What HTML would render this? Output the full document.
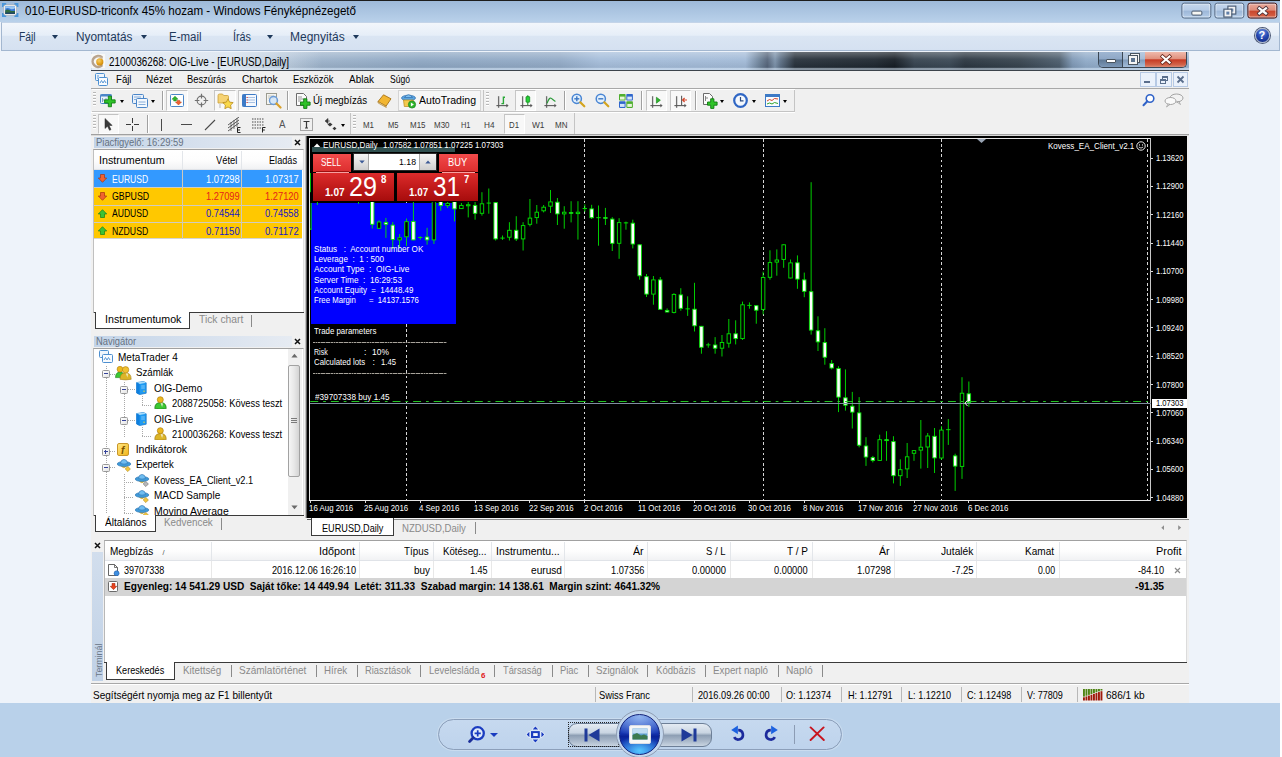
<!DOCTYPE html>
<html><head><meta charset="utf-8"><title>010-EURUSD-triconfx 45% hozam - Windows Fényképnézegető</title>
<style>
*{box-sizing:border-box;margin:0;padding:0}
html,body{width:1282px;height:757px;overflow:hidden;background:#eef3fa;font-family:"Liberation Sans",sans-serif;}
.a{position:absolute;display:block}
.t{position:absolute;white-space:pre;line-height:1}
#pvt{left:0;top:0;width:1280px;height:22px;background:linear-gradient(#9db9d9 0,#a9c3e0 40%,#b9d1ea 100%);border-top:1px solid #1c1c1c}
#pvm{left:1px;top:22px;width:1279px;height:29px;background:linear-gradient(#f2f6fb 0,#e6eef8 45%,#dae5f3 50%,#d5e1f1 100%);border:1px solid #a3b7d0;border-top:1px solid #c4d4e8}
#pvb{left:0;top:703px;width:1280px;height:54px;background:#b9d1ea}
#mtbg{left:91px;top:52px;width:1098px;height:651px;background:#f0f0f0}
.cb{top:0;width:30px;height:16px;border:1px solid #5c6f88;border-radius:3px;background:linear-gradient(#c6d7ec 0,#b5cbe6 48%,#9db7d8 52%,#b4cce8 100%);box-shadow:inset 0 0 0 1px rgba(255,255,255,.55)}
.cx{border-color:#4b1a1a;background:linear-gradient(#e9aa9c 0,#dc8a78 48%,#c8452c 52%,#d8664a 100%)}
.dn{top:35px;width:0;height:0;border-left:3.5px solid transparent;border-right:3.5px solid transparent;border-top:4px solid #1e395b}
#mtt{left:91px;top:52px;width:1098px;height:18px;background:linear-gradient(180deg,rgba(255,255,255,.30) 0,rgba(255,255,255,.06) 40%,rgba(0,0,0,.06) 85%,rgba(215,230,245,.55) 92%,rgba(215,230,245,.55) 100%),linear-gradient(90deg,#c8d6e6 0,#9db3cb 20.9%,#8fa8c4 30%,#93abc7 42.7%,#a6bedb 46.4%,#a3bbd8 59.6%,#6d8299 60.9%,#55647a 61.6%,#7d93ab 62.3%,#5d7086 62.8%,#27313b 64.1%,#1f2831 71.4%,#161d24 73.2%,#36434f 75%,#3a4855 78.2%,#2b3641 79.6%,#37444f 84.6%,#4c5d6d 88.2%,#7f99b6 89.4%,#90abc9 90.6%,#9db6d2 100%)}
#wst{left:1280px;top:0;width:2px;height:757px;background:#fff}
</style></head><body>
<div class="a" style="left:0;top:0;width:1282px;height:757px;overflow:hidden">
<div id="pvt" class="a"></div><div id="pvm" class="a"></div><div id="pvb" class="a"></div>
<svg class="a" style="left:2px;top:3px;" width="17" height="15" viewBox="0 0 17 15"><rect x="0" y="0" width="4.2" height="4" fill="#4a97dc"/><rect x="12.4" y="0" width="4" height="4" fill="#4a97dc"/><rect x="0" y="10" width="4.2" height="4" fill="#4a97dc"/><rect x="12.4" y="10" width="4" height="4" fill="#4a97dc"/>
<rect x="1.8" y="1.9" width="12.6" height="10.3" rx="1.6" fill="#fcfcfc" stroke="#a9a9ae" stroke-width="0.7"/><rect x="3.2" y="3.2" width="9.8" height="7.6" fill="#3a78d8"/><path d="M3.2 5.5 q3-1 5 0.3 t4.8 -0.5 V3.2 H3.2Z" fill="#9cc8f2"/><path d="M3.2 10.8 V7.6 q2-1.8 4.6-0.4 t5.2 0.6 V10.8Z" fill="#2f6a40"/><path d="M3.2 10.8 V9.6 h9.8 V10.8Z" fill="#1c3a6a"/></svg>
<div class="t" style="font-size:12px;color:#000;left:25.00px;top:5.00px;transform:scaleX(0.9675);transform-origin:0 0;">010-EURUSD-triconfx 45% hozam - Windows Fényképnézegető</div>
<div class="a" style="left:1181px;top:2px;width:100px;height:18px;transform:translate(0.35px,0.6px)"><div class="a cb" style="left:0px"><i class="a" style="left:9px;top:7px;width:11px;height:5px;background:#f6f6f2;border:1px solid #46566c;border-radius:1.5px"></i></div>
<div class="a cb" style="left:33px"><i class="a" style="left:13px;top:3px;width:7px;height:7px;border:2px solid #f2f2f2;outline:1px solid #46566c;background:#6f8db8"></i><i class="a" style="left:9px;top:6px;width:7px;height:7px;border:2px solid #f2f2f2;outline:1px solid #46566c;background:#5f7ea8"></i></div>
<div class="a cb cx" style="left:66px"><svg class="a" style="left:8px;top:2px" width="14" height="12" viewBox="0 0 14 12"><path d="M3 2.7 L9.6 7.9 M9.6 2.7 L3 7.9" stroke="#4a3038" stroke-width="4" stroke-linecap="square"/><path d="M3 2.7 L9.6 7.9 M9.6 2.7 L3 7.9" stroke="#fbfbfb" stroke-width="2.3" stroke-linecap="square"/></svg></div></div>
<div class="t" style="font-size:12px;color:#1e395b;left:18.70px;top:31.00px;transform:scaleX(0.8585);transform-origin:0 0;">Fájl</div>
<div class="t" style="font-size:12px;color:#1e395b;left:75.50px;top:31.00px;transform:scaleX(0.9852);transform-origin:0 0;">Nyomtatás</div>
<div class="t" style="font-size:12px;color:#1e395b;left:168.50px;top:31.00px;transform:scaleX(0.9558);transform-origin:0 0;">E-mail</div>
<div class="t" style="font-size:12px;color:#1e395b;left:233.00px;top:31.00px;transform:scaleX(0.8999);transform-origin:0 0;">Írás</div>
<div class="t" style="font-size:12px;color:#1e395b;left:290.00px;top:31.00px;">Megnyitás</div>
<i class="a dn" style="left:52px"></i>
<i class="a dn" style="left:141px"></i>
<i class="a dn" style="left:267px"></i>
<i class="a dn" style="left:353px"></i>
<div class="a" style="left:1254.5px;top:27.5px;width:15px;height:15px;border-radius:50%;background:radial-gradient(circle at 50% 25%,#6b8fe0 0,#2446b0 50%,#10277a 100%);border:1.5px solid #a4afc4;box-shadow:0 0 0 1px #4c5875"></div>
<div class="t" style="font-size:11px;color:#fff;font-weight:bold;left:1258.60px;top:30.00px;">?</div>
<div id="mtbg" class="a"></div>
<i class="a" id="mtt"></i>
<i class="a" style="left:92px;top:52px;width:230px;height:18px;background:linear-gradient(90deg,rgba(233,239,246,.95) 0,rgba(226,234,243,.9) 60%,rgba(220,230,240,0) 100%)"></i>
<i class="a" style="left:91px;top:70px;width:1098px;height:1px;background:#3c434b;"></i>
<i class="a" style="left:91px;top:54px;width:14px;height:14px;background:rgba(250,250,248,.85);"></i>
<svg class="a" style="left:91px;top:53.5px;" width="14" height="15" viewBox="0 0 14 15"><defs><radialGradient id="gb" cx="40%" cy="35%" r="70%"><stop offset="0" stop-color="#f7cf6a"/><stop offset="0.6" stop-color="#e3a21c"/><stop offset="1" stop-color="#c58512"/></radialGradient></defs><path d="M10.6 3.1 A5.5 5.5 0 1 0 10.6 11.7" fill="none" stroke="#b7a38e" stroke-width="2.5" stroke-linecap="round"/><path d="M11.5 4.6 A4.6 4.6 0 0 0 4.5 4.2" fill="none" stroke="#cbbba8" stroke-width="1"/><circle cx="8.8" cy="7.9" r="3.6" fill="url(#gb)"/></svg>
<div class="t" style="font-size:12px;color:#000;left:109.00px;top:56.00px;transform:scaleX(0.8204);transform-origin:0 0;">2100036268: OIG-Live - [EURUSD,Daily]</div>
<i class="a" style="left:1098px;top:52px;width:88.6px;height:16px;border-radius:0 0 5px 5px;border:1px solid #3b4754;border-top:0;background:transparent"></i>
<i class="a" style="left:1099px;top:52px;width:23px;height:15px;border-radius:0 0 0 4px;background:linear-gradient(#9fb6d2 0,#8ea7c6 48%,#5f7894 52%,#7c98b8 100%)"></i>
<i class="a" style="left:1123px;top:52px;width:22px;height:15px;background:linear-gradient(#b9cbe0 0,#a6bcd6 48%,#7f9ab9 52%,#a3bdda 100%)"></i>
<i class="a" style="left:1122px;top:52px;width:1px;height:15px;background:#3b4754;"></i>
<i class="a" style="left:1145.4px;top:52px;width:40.4px;height:15px;border-radius:0 0 4px 0;background:linear-gradient(#efb9ab 0,#e0917e 45%,#c63b24 52%,#d2644a 85%,#dd8a74 100%)"></i>
<i class="a" style="left:1106px;top:59px;width:10px;height:4px;background:#fff;border:1px solid #4a5560;border-radius:1px"></i>
<i class="a" style="left:1131px;top:54px;width:8px;height:8px;border:1.5px solid #f4f4f4;outline:1px solid #4a5560;background:#93abc7"></i><i class="a" style="left:1129px;top:56px;width:8px;height:8px;border:2px solid #f4f4f4;outline:1px solid #4a5560;background:#5c7490"></i>
<svg class="a" style="left:1160px;top:54px;" width="12" height="11" viewBox="0 0 12 11"><path d="M2.5 2.5 L9.5 8.5 M9.5 2.5 L2.5 8.5" stroke="#6a2a20" stroke-width="3.8" stroke-linecap="square"/><path d="M2.5 2.5 L9.5 8.5 M9.5 2.5 L2.5 8.5" stroke="#fff" stroke-width="2.2" stroke-linecap="square"/></svg>
<i class="a" style="left:91px;top:71px;width:1098px;height:17px;background:#f0f0f0;"></i>
<i class="a" style="left:91px;top:88px;width:1098px;height:1px;background:#a8a8a8;"></i>
<svg class="a" style="left:95px;top:73px;" width="13" height="13" viewBox="0 0 13 13"><rect x="0.5" y="0.5" width="9" height="7" rx="1" fill="#eef5fc" stroke="#4d8fd0"/><rect x="3.5" y="4.5" width="9" height="8" rx="1" fill="#f8fbfe" stroke="#4d8fd0"/><path d="M5 10 L6.5 7.5 L8 10 L9.5 7.5 L11 10" stroke="#4d8fd0" fill="none" stroke-width="0.9"/><path d="M2 3h2M2 5h1" stroke="#4d8fd0" stroke-width="0.9"/></svg>
<div class="t" style="font-size:11.5px;color:#000;left:115.50px;top:74.00px;transform:scaleX(0.8365);transform-origin:0 0;">Fájl</div>
<div class="t" style="font-size:11.5px;color:#000;left:146.00px;top:74.00px;transform:scaleX(0.8655);transform-origin:0 0;">Nézet</div>
<div class="t" style="font-size:11.5px;color:#000;left:187.00px;top:74.00px;transform:scaleX(0.8136);transform-origin:0 0;">Beszúrás</div>
<div class="t" style="font-size:11.5px;color:#000;left:242.00px;top:74.00px;transform:scaleX(0.8817);transform-origin:0 0;">Chartok</div>
<div class="t" style="font-size:11.5px;color:#000;left:293.00px;top:74.00px;transform:scaleX(0.8230);transform-origin:0 0;">Eszközök</div>
<div class="t" style="font-size:11.5px;color:#000;left:349.00px;top:74.00px;transform:scaleX(0.8691);transform-origin:0 0;">Ablak</div>
<div class="t" style="font-size:11.5px;color:#000;left:390.00px;top:74.00px;transform:scaleX(0.7447);transform-origin:0 0;">Súgó</div>
<i class="a" style="left:1140px;top:72px;width:16px;height:15px;background:#eaf1fb;border:1px solid #b6c9e4"></i>
<i class="a" style="left:1156px;top:72px;width:16px;height:15px;background:#eaf1fb;border:1px solid #b6c9e4"></i>
<i class="a" style="left:1173px;top:72px;width:15px;height:15px;background:#eaf1fb;border:1px solid #b6c9e4"></i>
<i class="a" style="left:1144px;top:81px;width:6px;height:2px;background:#5a6e8c;"></i>
<i class="a" style="left:1162px;top:76px;width:6px;height:5px;border:1px solid #5a6e8c;border-top-width:2px"></i><i class="a" style="left:1160px;top:79px;width:6px;height:5px;border:1px solid #5a6e8c;border-top-width:2px;background:#eaf1fb"></i>
<svg class="a" style="left:1176px;top:75px;" width="9" height="9" viewBox="0 0 9 9"><path d="M1.5 1.5 L7.5 7.5 M7.5 1.5 L1.5 7.5" stroke="#5a6e8c" stroke-width="1.8"/></svg>
<i class="a" style="left:92px;top:89px;width:703px;height:1px;background:#fff;"></i>
<i class="a" style="left:92px;top:111px;width:703px;height:1px;background:#c4c4c4;"></i>
<i class="a" style="left:794px;top:90px;width:1px;height:22px;background:#c4c4c4;"></i>
<i class="a" style="left:91px;top:112px;width:704px;height:1px;background:#fff;"></i>
<i class="a" style="left:93px;top:92px;width:3px;height:1px;background:#b8b8b8;"></i>
<i class="a" style="left:93px;top:93px;width:3px;height:1px;background:#fff;"></i>
<i class="a" style="left:93px;top:95px;width:3px;height:1px;background:#b8b8b8;"></i>
<i class="a" style="left:93px;top:96px;width:3px;height:1px;background:#fff;"></i>
<i class="a" style="left:93px;top:98px;width:3px;height:1px;background:#b8b8b8;"></i>
<i class="a" style="left:93px;top:99px;width:3px;height:1px;background:#fff;"></i>
<i class="a" style="left:93px;top:101px;width:3px;height:1px;background:#b8b8b8;"></i>
<i class="a" style="left:93px;top:102px;width:3px;height:1px;background:#fff;"></i>
<i class="a" style="left:93px;top:104px;width:3px;height:1px;background:#b8b8b8;"></i>
<i class="a" style="left:93px;top:105px;width:3px;height:1px;background:#fff;"></i>
<svg class="a" style="left:100px;top:93px;" width="16" height="15" viewBox="0 0 16 15"><rect x="0.5" y="1.5" width="11" height="9" rx="1" fill="#e9f1fa" stroke="#4b86c8"/><rect x="0.5" y="1.5" width="11" height="2" fill="#4b86c8"/><path d="M2.5 5v4M4 6v2M6 5v3" stroke="#6a8db5" stroke-width="0.8"/><path d="M10 5v4h-4v3.4h4v4h3.4v-4h4v-3.4h-4v-4z" transform="translate(-1.0,-1.5) scale(0.93)" fill="#2fc228" stroke="#0e7a10" stroke-width="0.9"/></svg>
<i class="a" style="left:119.5px;top:100px;width:0;height:0;border-left:2.5px solid transparent;border-right:2.5px solid transparent;border-top:3px solid #000"></i>
<svg class="a" style="left:132px;top:93px;" width="16" height="15" viewBox="0 0 16 15"><rect x="0.5" y="1.5" width="11" height="9" rx="1" fill="#e9f1fa" stroke="#4b86c8"/><rect x="4.5" y="5.5" width="11" height="9" rx="1" fill="#f3f8fd" stroke="#4b86c8"/><path d="M2 4h7M2 6.5h2M6.5 9h7M6.5 11.5h7" stroke="#7da6d6" stroke-width="0.9"/></svg>
<i class="a" style="left:151px;top:100px;width:0;height:0;border-left:2.5px solid transparent;border-right:2.5px solid transparent;border-top:3px solid #000"></i>
<i class="a" style="left:162px;top:91px;width:1px;height:19px;background:#a0a0a0;"></i>
<i class="a" style="left:163px;top:91px;width:1px;height:19px;background:#fff;"></i>
<i class="a" style="left:166px;top:90px;width:22px;height:21px;background:#f8f8f8;border:1px solid #fff;border-top-color:#c2c2c2;border-left-color:#c6c6c6"></i>
<svg class="a" style="left:170px;top:94px;" width="14" height="13" viewBox="0 0 14 13"><rect x="0.5" y="0.5" width="13" height="12" rx="1" fill="#fdfefe" stroke="#4b86c8"/><path d="M5 2.2 L8 5.2 H6.3 V7 H3.7 V5.2 H2Z" fill="#2fb52a" stroke="#14801a" stroke-width="0.5"/><path d="M8.5 11 L5.5 8 H7.2 V6.4 H9.8 V8 H11.5Z" fill="#f0622f" stroke="#b43a12" stroke-width="0.5"/></svg>
<svg class="a" style="left:194px;top:93px;" width="15" height="15" viewBox="0 0 15 15"><circle cx="7.5" cy="7.5" r="4.4" fill="none" stroke="#707070" stroke-width="1.1"/><path d="M7.5 0.8v4.6M7.5 9.6v4.6M0.8 7.5h4.6M9.6 7.5h4.6" stroke="#707070" stroke-width="1.2"/></svg>
<i class="a" style="left:214px;top:90px;width:22px;height:21px;background:#f8f8f8;border:1px solid #fff;border-top-color:#c2c2c2;border-left-color:#c6c6c6"></i>
<svg class="a" style="left:217px;top:93px;" width="17" height="16" viewBox="0 0 17 16"><path d="M1 2.5 q0-1.5 1.5-1.5 h3 l1.2 1.5 h3.8 q1 0 1 1 v6.5 h-10.5z" fill="#f6d374" stroke="#c9a03a" stroke-width="0.8"/><path d="M3 11.5v1M3 13.5v1" stroke="#777" stroke-width="1"/><path d="M11 5.8 l1.6 3.3 3.6 0.5 -2.6 2.5 0.6 3.6 -3.2-1.7 -3.2 1.7 0.6-3.6 -2.6-2.5 3.6-0.5z" fill="#f9d84a" stroke="#b98a1a" stroke-width="0.8"/></svg>
<i class="a" style="left:238px;top:90px;width:22px;height:21px;background:#f8f8f8;border:1px solid #fff;border-top-color:#c2c2c2;border-left-color:#c6c6c6"></i>
<svg class="a" style="left:242px;top:94px;" width="15" height="13" viewBox="0 0 15 13"><rect x="0.5" y="0.5" width="14" height="12" rx="1" fill="#f4f8fe" stroke="#3d7ac6"/><rect x="0.5" y="0.5" width="3.5" height="12" fill="#3d7ac6"/><path d="M5 3.5h8M5 6h8M5 8.5h8" stroke="#9fbbe0" stroke-width="0.9"/><path d="M4.5 3.5h1.2M4.5 6h1.2M4.5 8.5h1.2" stroke="#e23b2e" stroke-width="1"/></svg>
<svg class="a" style="left:266px;top:93px;" width="16" height="16" viewBox="0 0 16 16"><rect x="0.5" y="0.5" width="10" height="11" fill="#f4f4f0" stroke="#9b9b90"/><path d="M2 3h6M2 5h6" stroke="#b9b9b0" stroke-width="0.8"/><circle cx="7.5" cy="7.5" r="4" fill="#cfe4f7" fill-opacity="0.8" stroke="#6a9bd8" stroke-width="1.4"/><path d="M10.5 10.5 L14.5 14.5" stroke="#d9a02a" stroke-width="2.2" stroke-linecap="round"/></svg>
<i class="a" style="left:287px;top:91px;width:1px;height:19px;background:#a0a0a0;"></i>
<i class="a" style="left:288px;top:91px;width:1px;height:19px;background:#fff;"></i>
<svg class="a" style="left:296px;top:93px;" width="15" height="16" viewBox="0 0 15 16"><path d="M0.5 0.5h7l3 3v9h-10z" fill="#fbfbfb" stroke="#6b6b6b"/><path d="M2 4h4M2 6h6M2 8h3" stroke="#8a8a8a" stroke-width="0.9"/><path d="M9 7v3.2h-3.2v3.2h3.2v3.2h3.2v-3.2h3.2v-3.2h-3.2v-3.2z" transform="translate(-1.3,-1.2)" fill="#2fc228" stroke="#0e7a10" stroke-width="0.9"/></svg>
<div class="t" style="font-size:11.5px;color:#000;left:313.00px;top:95.00px;transform:scaleX(0.8449);transform-origin:0 0;">Új megbízás</div>
<svg class="a" style="left:377px;top:94px;" width="15" height="14" viewBox="0 0 15 14"><path d="M1 7.5 L6.5 0.8 L14 4.8 L9 12.2Z" fill="#f2b632" stroke="#a8741a" stroke-width="0.9"/><path d="M1 7.5 L9 12.2 L9.3 13.4 L1.2 9Z" fill="#fff3c4" stroke="#a8741a" stroke-width="0.7"/></svg>
<i class="a" style="left:398px;top:90px;width:83px;height:21px;background:#f6f6f6;border:1px solid #d4d4d4"></i>
<svg class="a" style="left:401px;top:93px;" width="16" height="16" viewBox="0 0 16 16"><ellipse cx="7.5" cy="5" rx="7" ry="2.8" fill="#5aa4e0" stroke="#2f6fae" stroke-width="0.7"/><path d="M3.5 4.5 q4-5.5 8 0z" fill="#7fc0f0" stroke="#2f6fae" stroke-width="0.7"/><path d="M2.5 7 l0.8 6.5 h7.5 l1.5-6.5z" fill="#f3c94e" stroke="#b98a1a" stroke-width="0.7"/><circle cx="11" cy="11.5" r="3.6" fill="#2fb52a" stroke="#14801a" stroke-width="0.7"/><path d="M9.9 9.6 L12.9 11.5 L9.9 13.4Z" fill="#fff"/></svg>
<div class="t" style="font-size:11.5px;color:#000;left:419.00px;top:95.00px;transform:scaleX(0.9161);transform-origin:0 0;">AutoTrading</div>
<i class="a" style="left:483px;top:90px;width:1px;height:21px;background:#c4c4c4;"></i>
<i class="a" style="left:486px;top:92px;width:3px;height:1px;background:#b8b8b8;"></i>
<i class="a" style="left:486px;top:93px;width:3px;height:1px;background:#fff;"></i>
<i class="a" style="left:486px;top:95px;width:3px;height:1px;background:#b8b8b8;"></i>
<i class="a" style="left:486px;top:96px;width:3px;height:1px;background:#fff;"></i>
<i class="a" style="left:486px;top:98px;width:3px;height:1px;background:#b8b8b8;"></i>
<i class="a" style="left:486px;top:99px;width:3px;height:1px;background:#fff;"></i>
<i class="a" style="left:486px;top:101px;width:3px;height:1px;background:#b8b8b8;"></i>
<i class="a" style="left:486px;top:102px;width:3px;height:1px;background:#fff;"></i>
<i class="a" style="left:486px;top:104px;width:3px;height:1px;background:#b8b8b8;"></i>
<i class="a" style="left:486px;top:105px;width:3px;height:1px;background:#fff;"></i>
<svg class="a" style="left:495.5px;top:94.8px;" width="14" height="14" viewBox="0 0 14 14"><path d="M2.6 1.2v11.6" stroke="#6e6e6e" stroke-width="1.3"/><path d="M0.4 10.6h11" stroke="#5a5a5a" stroke-width="1.1"/><path d="M10.4 8.8l2.2 1.8-2.2 1.8z" fill="#5a5a5a"/><path d="M5.4 8.6h2v-6.4h1.6" fill="none" stroke="#2aa838" stroke-width="1.4"/></svg>
<i class="a" style="left:515.3px;top:90px;width:20.8px;height:21px;background:#f8f8f8;border:1px solid #fff;border-top-color:#c2c2c2;border-left-color:#c6c6c6"></i>
<svg class="a" style="left:519.5px;top:94.8px;" width="14" height="14" viewBox="0 0 14 14"><path d="M2.6 1.2v11.6" stroke="#6e6e6e" stroke-width="1.3"/><path d="M0.4 10.6h11" stroke="#5a5a5a" stroke-width="1.1"/><path d="M10.4 8.8l2.2 1.8-2.2 1.8z" fill="#5a5a5a"/><path d="M7.8 0.2v9.8" stroke="#158a22" stroke-width="1"/><rect x="6" y="1.6" width="3.7" height="5.6" rx="0.6" fill="#25d236" stroke="#158a22" stroke-width="0.8"/></svg>
<svg class="a" style="left:543.6px;top:94.8px;" width="14" height="14" viewBox="0 0 14 14"><path d="M2.6 1.2v11.6" stroke="#6e6e6e" stroke-width="1.3"/><path d="M0.4 10.6h11" stroke="#5a5a5a" stroke-width="1.1"/><path d="M10.4 8.8l2.2 1.8-2.2 1.8z" fill="#5a5a5a"/><path d="M3 8.4 Q5.4 1.6 7.4 3.4 T11.4 6.4" fill="none" stroke="#2a9a38" stroke-width="1.2"/></svg>
<i class="a" style="left:564px;top:91px;width:1px;height:19px;background:#a0a0a0;"></i>
<i class="a" style="left:565px;top:91px;width:1px;height:19px;background:#fff;"></i>
<svg class="a" style="left:571px;top:93px;" width="15" height="15" viewBox="0 0 15 15"><circle cx="5.8" cy="5.8" r="4.6" fill="#e3f0fc" stroke="#4a86d4" stroke-width="1.5"/><path d="M9.3 9.3 L13.3 13.3" stroke="#d4a41e" stroke-width="2.2" stroke-linecap="round"/><path d="M3.3 5.8h5" stroke="#3a76c4" stroke-width="1.4"/><path d="M5.8 3.3v5" stroke="#3a76c4" stroke-width="1.4"/></svg>
<svg class="a" style="left:595px;top:93px;" width="15" height="15" viewBox="0 0 15 15"><circle cx="5.8" cy="5.8" r="4.6" fill="#e3f0fc" stroke="#4a86d4" stroke-width="1.5"/><path d="M9.3 9.3 L13.3 13.3" stroke="#d4a41e" stroke-width="2.2" stroke-linecap="round"/><path d="M3.3 5.8h5" stroke="#3a76c4" stroke-width="1.4"/></svg>
<svg class="a" style="left:619.2px;top:94px;" width="14" height="14" viewBox="0 0 14 14"><rect x="0" y="0" width="6.6" height="6.6" rx="0.8" fill="#4fae2e"/><rect x="7.3" y="0" width="6.6" height="6.6" rx="0.8" fill="#2f66cc"/><rect x="0" y="7.3" width="6.6" height="6.6" rx="0.8" fill="#2f66cc"/><rect x="7.3" y="7.3" width="6.6" height="6.6" rx="0.8" fill="#4fae2e"/><rect x="1" y="2.6" width="4.6" height="3" fill="#e6f6d8"/><rect x="8.3" y="2.6" width="4.6" height="3" fill="#d6e6fa"/><rect x="1" y="9.9" width="4.6" height="3" fill="#d6e6fa"/><rect x="8.3" y="9.9" width="4.6" height="3" fill="#e6f6d8"/></svg>
<i class="a" style="left:641px;top:91px;width:1px;height:19px;background:#a0a0a0;"></i>
<i class="a" style="left:642px;top:91px;width:1px;height:19px;background:#fff;"></i>
<i class="a" style="left:646px;top:90px;width:21px;height:21px;background:#f8f8f8;border:1px solid #fff;border-top-color:#c2c2c2;border-left-color:#c6c6c6"></i>
<svg class="a" style="left:650px;top:94.8px;" width="14" height="14" viewBox="0 0 14 14"><path d="M2.6 1.2v11.6" stroke="#6e6e6e" stroke-width="1.3"/><path d="M0.4 10.6h11" stroke="#5a5a5a" stroke-width="1.1"/><path d="M10.4 8.8l2.2 1.8-2.2 1.8z" fill="#5a5a5a"/><path d="M6.4 2.2 L10.4 5.2 L6.4 8.2Z" fill="#2fb52a" stroke="#14801a" stroke-width="0.6"/></svg>
<i class="a" style="left:669.5px;top:90px;width:21.5px;height:21px;background:#f8f8f8;border:1px solid #fff;border-top-color:#c2c2c2;border-left-color:#c6c6c6"></i>
<svg class="a" style="left:673.5px;top:94.8px;" width="15" height="14" viewBox="0 0 15 14"><path d="M2.6 1.2v11.6" stroke="#6e6e6e" stroke-width="1.3"/><path d="M0.4 10.6h11" stroke="#5a5a5a" stroke-width="1.1"/><path d="M10.4 8.8l2.2 1.8-2.2 1.8z" fill="#5a5a5a"/><path d="M7.6 0.8v9.4" stroke="#5a5a5a" stroke-width="1.1"/><path d="M13 5h-4.4M10.6 3l-2 2 2 2" stroke="#d5462a" stroke-width="1.2" fill="none"/></svg>
<i class="a" style="left:695px;top:91px;width:1px;height:19px;background:#a0a0a0;"></i>
<i class="a" style="left:696px;top:91px;width:1px;height:19px;background:#fff;"></i>
<svg class="a" style="left:703px;top:93px;" width="15" height="16" viewBox="0 0 15 16"><path d="M0.5 0.5h6l3 3v8h-9z" fill="#fbfbfb" stroke="#6b6b6b"/><path d="M2.5 3v5M4 4v2" stroke="#777" stroke-width="0.9"/><path d="M9 7v3.2h-3.2v3.2h3.2v3.2h3.2v-3.2h3.2v-3.2h-3.2v-3.2z" transform="translate(-1.3,-1.2)" fill="#2fc228" stroke="#0e7a10" stroke-width="0.9"/></svg>
<i class="a" style="left:720px;top:100px;width:0;height:0;border-left:2.5px solid transparent;border-right:2.5px solid transparent;border-top:3px solid #000"></i>
<svg class="a" style="left:733px;top:93px;" width="15" height="15" viewBox="0 0 15 15"><circle cx="7.5" cy="7.5" r="6.3" fill="#f4f8fd" stroke="#2f66c4" stroke-width="2.2"/><path d="M7.5 4v3.8h3" fill="none" stroke="#2a4a80" stroke-width="1.2"/></svg>
<i class="a" style="left:752px;top:100px;width:0;height:0;border-left:2.5px solid transparent;border-right:2.5px solid transparent;border-top:3px solid #000"></i>
<svg class="a" style="left:765px;top:94px;" width="15" height="13" viewBox="0 0 15 13"><rect x="0.5" y="0.5" width="14" height="12" fill="#f8fbfe" stroke="#3d7ac6"/><rect x="0.5" y="0.5" width="14" height="2.5" fill="#3d7ac6"/><path d="M2 7 l2.5-1.5 2.5 1 2.5-2 3.5 0.5" stroke="#d5462a" fill="none" stroke-width="1"/><path d="M2 10 l2.5-1 2.5 1 2.5-1.5 3.5 1" stroke="#2fa52a" fill="none" stroke-width="1"/></svg>
<i class="a" style="left:783px;top:100px;width:0;height:0;border-left:2.5px solid transparent;border-right:2.5px solid transparent;border-top:3px solid #000"></i>
<svg class="a" style="left:1142px;top:93px;" width="14" height="14" viewBox="0 0 14 14"><circle cx="8" cy="5.5" r="3.8" fill="#fff" stroke="#2f62c8" stroke-width="1.6"/><path d="M5.3 8.3 L1.5 12.3" stroke="#2f62c8" stroke-width="2" stroke-linecap="round"/></svg>
<svg class="a" style="left:1164px;top:93px;" width="20" height="15" viewBox="0 0 20 15"><ellipse cx="12.5" cy="5" rx="6.5" ry="4" fill="#f2f2f2" stroke="#9a9a9a" stroke-width="0.9"/><path d="M15 8.5l1.5 3-3.5-2.5z" fill="#f2f2f2" stroke="#9a9a9a" stroke-width="0.7"/><ellipse cx="6.5" cy="8" rx="5.5" ry="3.5" fill="#fafafa" stroke="#9a9a9a" stroke-width="0.9"/><path d="M4 11l-1.5 3 3.5-2.6z" fill="#fafafa" stroke="#9a9a9a" stroke-width="0.7"/></svg>
<i class="a" style="left:91px;top:134px;width:1098px;height:1px;background:#a0a0a0;"></i>
<i class="a" style="left:91px;top:135px;width:1098px;height:1px;background:#d9d9d9;"></i>
<i class="a" style="left:574px;top:113px;width:1px;height:21px;background:#c4c4c4;"></i>
<i class="a" style="left:93px;top:115px;width:3px;height:1px;background:#b8b8b8;"></i>
<i class="a" style="left:93px;top:116px;width:3px;height:1px;background:#fff;"></i>
<i class="a" style="left:93px;top:118px;width:3px;height:1px;background:#b8b8b8;"></i>
<i class="a" style="left:93px;top:119px;width:3px;height:1px;background:#fff;"></i>
<i class="a" style="left:93px;top:121px;width:3px;height:1px;background:#b8b8b8;"></i>
<i class="a" style="left:93px;top:122px;width:3px;height:1px;background:#fff;"></i>
<i class="a" style="left:93px;top:124px;width:3px;height:1px;background:#b8b8b8;"></i>
<i class="a" style="left:93px;top:125px;width:3px;height:1px;background:#fff;"></i>
<i class="a" style="left:93px;top:127px;width:3px;height:1px;background:#b8b8b8;"></i>
<i class="a" style="left:93px;top:128px;width:3px;height:1px;background:#fff;"></i>
<i class="a" style="left:98px;top:114px;width:21px;height:20px;background:#f8f8f8;border:1px solid #fff;border-top-color:#c2c2c2;border-left-color:#c6c6c6"></i>
<svg class="a" style="left:104px;top:118px;" width="9" height="13" viewBox="0 0 9 13"><path d="M1 0.5 L1 10.5 L3.5 8.2 L5.5 12.3 L7 11.6 L5.1 7.6 L8.2 7.4Z" fill="#3a3a3a" stroke="#2a2a2a" stroke-width="0.5"/></svg>
<svg class="a" style="left:126px;top:118px;" width="14" height="14" viewBox="0 0 14 14"><path d="M6.5 0v5M6.5 8v5M0 6.5h5M8 6.5h5" stroke="#3a3a3a" stroke-width="1"/></svg>
<i class="a" style="left:147px;top:115px;width:1px;height:18px;background:#a0a0a0;"></i>
<i class="a" style="left:148px;top:115px;width:1px;height:18px;background:#fff;"></i>
<i class="a" style="left:161px;top:119px;width:1px;height:12px;background:#4a4a4a;"></i>
<i class="a" style="left:181px;top:124px;width:11px;height:1px;background:#4a4a4a;"></i>
<svg class="a" style="left:204px;top:119px;" width="12" height="12" viewBox="0 0 12 12"><path d="M1 11 L11 1" stroke="#4a4a4a" stroke-width="1.1"/></svg>
<svg class="a" style="left:227px;top:117px;" width="15" height="16" viewBox="0 0 15 16"><path d="M1 11 L12 3M1 14 L12 6M1 8 L12 0" stroke="#4a4a4a" stroke-width="0.9"/><path d="M4 5v9M7 3v9M10 1v9" stroke="#4a4a4a" stroke-width="0.7"/><path d="M10.5 10.5h3M10.5 10.5v5M10.5 13h2.5M10.5 15.5h3" stroke="#222" stroke-width="1" fill="none"/></svg>
<svg class="a" style="left:252px;top:118px;" width="14" height="15" viewBox="0 0 14 15"><path d="M0 1h12M0 4h12M0 7h12M0 10h9" stroke="#4a4a4a" stroke-width="1" stroke-dasharray="1.5 1"/><path d="M10.5 9.5h3M10.5 9.5v5M10.5 12h2.3" stroke="#222" stroke-width="1" fill="none"/></svg>
<div class="t" style="font-size:10px;color:#555;left:279.00px;top:120.00px;transform:scaleX(0.9745);transform-origin:0 0;">A</div>
<svg class="a" style="left:300px;top:118px;" width="13" height="13" viewBox="0 0 13 13"><rect x="0.5" y="0.5" width="12" height="12" fill="none" stroke="#5a5a5a" stroke-dasharray="1 1"/><path d="M3.5 3.5h6M6.5 3.5v6.5M5 10h3" stroke="#3a3a3a" stroke-width="1.2" fill="none"/></svg>
<svg class="a" style="left:324px;top:118px;" width="13" height="13" viewBox="0 0 13 13"><path d="M1 3 L4 0.5 L4 5.5Z M4 3h2" fill="#3a3a3a" stroke="#3a3a3a" stroke-width="0.6"/><path d="M3.5 6.5 l2.5-2 2.5 2 -2.5 2z M8.5 10.5 l2-1.7 2 1.7 -2 1.7z" fill="#3a3a3a"/></svg>
<i class="a" style="left:340.5px;top:124px;width:0;height:0;border-left:2.5px solid transparent;border-right:2.5px solid transparent;border-top:3px solid #000"></i>
<i class="a" style="left:350px;top:113px;width:1px;height:21px;background:#c4c4c4;"></i>
<i class="a" style="left:353px;top:115px;width:3px;height:1px;background:#b8b8b8;"></i>
<i class="a" style="left:353px;top:116px;width:3px;height:1px;background:#fff;"></i>
<i class="a" style="left:353px;top:118px;width:3px;height:1px;background:#b8b8b8;"></i>
<i class="a" style="left:353px;top:119px;width:3px;height:1px;background:#fff;"></i>
<i class="a" style="left:353px;top:121px;width:3px;height:1px;background:#b8b8b8;"></i>
<i class="a" style="left:353px;top:122px;width:3px;height:1px;background:#fff;"></i>
<i class="a" style="left:353px;top:124px;width:3px;height:1px;background:#b8b8b8;"></i>
<i class="a" style="left:353px;top:125px;width:3px;height:1px;background:#fff;"></i>
<i class="a" style="left:353px;top:127px;width:3px;height:1px;background:#b8b8b8;"></i>
<i class="a" style="left:353px;top:128px;width:3px;height:1px;background:#fff;"></i>
<i class="a" style="left:504px;top:114px;width:21px;height:20px;background:#f8f8f8;border:1px solid #fff;border-top-color:#c2c2c2;border-left-color:#c6c6c6"></i>
<div class="t" style="font-size:9px;color:#3c3c3c;left:363.00px;top:121.00px;transform:scaleX(0.8799);transform-origin:0 0;">M1</div>
<div class="t" style="font-size:9px;color:#3c3c3c;left:387.50px;top:121.00px;transform:scaleX(0.8399);transform-origin:0 0;">M5</div>
<div class="t" style="font-size:9px;color:#3c3c3c;left:410.00px;top:121.00px;transform:scaleX(0.8854);transform-origin:0 0;">M15</div>
<div class="t" style="font-size:9px;color:#3c3c3c;left:434.00px;top:121.00px;transform:scaleX(0.8854);transform-origin:0 0;">M30</div>
<div class="t" style="font-size:9px;color:#3c3c3c;left:461.00px;top:121.00px;transform:scaleX(0.8258);transform-origin:0 0;">H1</div>
<div class="t" style="font-size:9px;color:#3c3c3c;left:484.00px;top:121.00px;transform:scaleX(0.9127);transform-origin:0 0;">H4</div>
<div class="t" style="font-size:9px;color:#3c3c3c;left:509.00px;top:121.00px;transform:scaleX(0.8692);transform-origin:0 0;">D1</div>
<div class="t" style="font-size:9px;color:#3c3c3c;left:532.00px;top:121.00px;transform:scaleX(0.9259);transform-origin:0 0;">W1</div>
<div class="t" style="font-size:9px;color:#3c3c3c;left:555.00px;top:121.00px;transform:scaleX(0.8931);transform-origin:0 0;">MN</div>
<i class="a" style="left:94px;top:137px;width:198px;height:11px;background:linear-gradient(90deg,#c3d4e8 0,#d7e1ee 55%,#e6ebf2 100%)"></i>
<div class="t" style="font-size:10px;color:#667282;left:95.50px;top:138.00px;transform:scaleX(0.9425);transform-origin:0 0;">Piacfigyelő: 16:29:59</div>
<svg class="a" style="left:294px;top:139px;" width="7" height="7" viewBox="0 0 7 7"><path d="M1 1 L6 6 M6 1 L1 6" stroke="#111" stroke-width="1.5"/></svg>
<i class="a" style="left:93px;top:149px;width:210.5px;height:164px;background:#fff;border:1px solid #a0a0a0;border-left-color:#c0c0c0;border-right-color:#e0e0e0"></i>
<i class="a" style="left:94px;top:150px;width:209px;height:20px;background:linear-gradient(#fff 0,#fdfdfd 55%,#f1f2f4 100%);border-bottom:1px solid #e0e3e8"></i>
<i class="a" style="left:182px;top:151px;width:1px;height:18px;background:#e3e6ea;"></i>
<i class="a" style="left:241px;top:151px;width:1px;height:18px;background:#e3e6ea;"></i>
<div class="t" style="font-size:10.5px;color:#000;left:99.00px;top:155.00px;transform:scaleX(1.0221);transform-origin:0 0;">Instrumentum</div>
<div class="t" style="font-size:10.5px;color:#000;left:216.00px;top:155.00px;transform:scaleX(0.8942);transform-origin:0 0;">Vétel</div>
<div class="t" style="font-size:10.5px;color:#000;left:269.00px;top:155.00px;transform:scaleX(0.8722);transform-origin:0 0;">Eladás</div>
<i class="a" style="left:94px;top:170.3px;width:208.2px;height:17.299999999999983px;background:#3399ff;"></i>
<svg class="a" style="left:98px;top:174px;" width="9" height="9" viewBox="0 0 9 9"><path d="M2.5 0.5h4v3.5h2.2L4.5 8.3 0.3 4h2.2z" fill="#f0622f" stroke="#a8320e" stroke-width="0.7"/></svg>
<div class="t" style="font-size:10.5px;color:#fff;left:111.80px;top:174.00px;transform:scaleX(0.8164);transform-origin:0 0;">EURUSD</div>
<div class="t" style="font-size:10.5px;color:#fff;left:206.00px;top:174.00px;transform:scaleX(0.8880);transform-origin:0 0;">1.07298</div>
<div class="t" style="font-size:10.5px;color:#fff;left:265.00px;top:174.00px;transform:scaleX(0.8880);transform-origin:0 0;">1.07317</div>
<i class="a" style="left:94px;top:187.6px;width:208.2px;height:17.5px;background:#ffc800;"></i>
<svg class="a" style="left:98px;top:192px;" width="9" height="9" viewBox="0 0 9 9"><path d="M2.5 0.5h4v3.5h2.2L4.5 8.3 0.3 4h2.2z" fill="#f0622f" stroke="#a8320e" stroke-width="0.7"/></svg>
<div class="t" style="font-size:10.5px;color:#000;left:111.80px;top:191.00px;transform:scaleX(0.8389);transform-origin:0 0;">GBPUSD</div>
<div class="t" style="font-size:10.5px;color:#e3221b;left:206.00px;top:191.00px;transform:scaleX(0.8880);transform-origin:0 0;">1.27099</div>
<div class="t" style="font-size:10.5px;color:#e3221b;left:265.00px;top:191.00px;transform:scaleX(0.8880);transform-origin:0 0;">1.27120</div>
<i class="a" style="left:94px;top:205.1px;width:208.2px;height:17.200000000000017px;background:#ffc800;"></i>
<svg class="a" style="left:98px;top:209px;" width="9" height="9" viewBox="0 0 9 9"><path d="M2.5 8.5h4v-3.5h2.2L4.5 0.7 0.3 5h2.2z" fill="#3cc235" stroke="#14801a" stroke-width="0.7"/></svg>
<div class="t" style="font-size:10.5px;color:#000;left:111.80px;top:208.00px;transform:scaleX(0.8164);transform-origin:0 0;">AUDUSD</div>
<div class="t" style="font-size:10.5px;color:#1616c4;left:206.00px;top:208.00px;transform:scaleX(0.8880);transform-origin:0 0;">0.74544</div>
<div class="t" style="font-size:10.5px;color:#1616c4;left:265.00px;top:208.00px;transform:scaleX(0.8880);transform-origin:0 0;">0.74558</div>
<i class="a" style="left:94px;top:222.3px;width:208.2px;height:16.299999999999983px;background:#ffc800;"></i>
<svg class="a" style="left:98px;top:226px;" width="9" height="9" viewBox="0 0 9 9"><path d="M2.5 8.5h4v-3.5h2.2L4.5 0.7 0.3 5h2.2z" fill="#3cc235" stroke="#14801a" stroke-width="0.7"/></svg>
<div class="t" style="font-size:10.5px;color:#000;left:111.80px;top:226.00px;transform:scaleX(0.8274);transform-origin:0 0;">NZDUSD</div>
<div class="t" style="font-size:10.5px;color:#1616c4;left:206.00px;top:226.00px;transform:scaleX(0.9066);transform-origin:0 0;">0.71150</div>
<div class="t" style="font-size:10.5px;color:#1616c4;left:265.00px;top:226.00px;transform:scaleX(0.9066);transform-origin:0 0;">0.71172</div>
<i class="a" style="left:94px;top:187.1px;width:208.2px;height:1px;background:#d0ccc0;"></i>
<i class="a" style="left:94px;top:204.6px;width:208.2px;height:1px;background:#d0ccc0;"></i>
<i class="a" style="left:94px;top:221.8px;width:208.2px;height:1px;background:#d0ccc0;"></i>
<i class="a" style="left:94px;top:238.1px;width:208.2px;height:1px;background:#d4d4d4;"></i>
<i class="a" style="left:182px;top:170.3px;width:1px;height:68.3px;background:#cfc9b8;"></i>
<i class="a" style="left:241px;top:170.3px;width:1px;height:68.3px;background:#cfc9b8;"></i>
<i class="a" style="left:94px;top:312px;width:210px;height:1px;background:#3a3a3a;"></i>
<i class="a" style="left:95px;top:312px;width:95px;height:17px;background:#fff;border:1px solid #3a3a3a;border-top:0"></i>
<div class="t" style="font-size:10.5px;color:#000;left:104.60px;top:314.00px;transform:scaleX(1.0150);transform-origin:0 0;">Instrumentumok</div>
<div class="t" style="font-size:10.5px;color:#8a8a8a;left:198.70px;top:314.00px;transform:scaleX(0.9819);transform-origin:0 0;">Tick chart</div>
<i class="a" style="left:251px;top:315px;width:1px;height:12px;background:#8a8a8a;"></i>
<i class="a" style="left:94px;top:336px;width:198px;height:11px;background:linear-gradient(90deg,#c3d4e8 0,#d7e1ee 55%,#e6ebf2 100%)"></i>
<div class="t" style="font-size:10px;color:#667282;left:95.50px;top:337.00px;transform:scaleX(0.9394);transform-origin:0 0;">Navigátor</div>
<svg class="a" style="left:294px;top:338px;" width="7" height="7" viewBox="0 0 7 7"><path d="M1 1 L6 6 M6 1 L1 6" stroke="#111" stroke-width="1.5"/></svg>
<i class="a" style="left:93px;top:348px;width:210.5px;height:168px;background:#fff;border:1px solid #a0a0a0;border-left-color:#c0c0c0;border-right-color:#e0e0e0"></i>
<i class="a" style="left:106px;top:366px;width:1px;height:148px;background:repeating-linear-gradient(180deg,#a9a9a9 0 1px,transparent 1px 2px)"></i>
<i class="a" style="left:110px;top:374px;width:6px;height:1px;background:repeating-linear-gradient(90deg,#a9a9a9 0 1px,transparent 1px 2px)"></i>
<i class="a" style="left:124px;top:382px;width:1px;height:56px;background:repeating-linear-gradient(180deg,#a9a9a9 0 1px,transparent 1px 2px)"></i>
<i class="a" style="left:128px;top:389px;width:7px;height:1px;background:repeating-linear-gradient(90deg,#a9a9a9 0 1px,transparent 1px 2px)"></i>
<i class="a" style="left:128px;top:420px;width:7px;height:1px;background:repeating-linear-gradient(90deg,#a9a9a9 0 1px,transparent 1px 2px)"></i>
<i class="a" style="left:142px;top:396px;width:1px;height:10px;background:repeating-linear-gradient(180deg,#a9a9a9 0 1px,transparent 1px 2px)"></i>
<i class="a" style="left:142px;top:405px;width:10px;height:1px;background:repeating-linear-gradient(90deg,#a9a9a9 0 1px,transparent 1px 2px)"></i>
<i class="a" style="left:142px;top:427px;width:1px;height:10px;background:repeating-linear-gradient(180deg,#a9a9a9 0 1px,transparent 1px 2px)"></i>
<i class="a" style="left:142px;top:436px;width:10px;height:1px;background:repeating-linear-gradient(90deg,#a9a9a9 0 1px,transparent 1px 2px)"></i>
<i class="a" style="left:110px;top:451px;width:6px;height:1px;background:repeating-linear-gradient(90deg,#a9a9a9 0 1px,transparent 1px 2px)"></i>
<i class="a" style="left:110px;top:467px;width:6px;height:1px;background:repeating-linear-gradient(90deg,#a9a9a9 0 1px,transparent 1px 2px)"></i>
<i class="a" style="left:124px;top:474px;width:1px;height:40px;background:repeating-linear-gradient(180deg,#a9a9a9 0 1px,transparent 1px 2px)"></i>
<i class="a" style="left:124px;top:482px;width:10px;height:1px;background:repeating-linear-gradient(90deg,#a9a9a9 0 1px,transparent 1px 2px)"></i>
<i class="a" style="left:124px;top:497px;width:10px;height:1px;background:repeating-linear-gradient(90deg,#a9a9a9 0 1px,transparent 1px 2px)"></i>
<i class="a" style="left:124px;top:513px;width:10px;height:1px;background:repeating-linear-gradient(90deg,#a9a9a9 0 1px,transparent 1px 2px)"></i>
<svg class="a" style="left:99px;top:350px;" width="14" height="13" viewBox="0 0 14 13"><rect x="0.5" y="0.5" width="9" height="7" rx="1" fill="#eef5fc" stroke="#4d8fd0"/><rect x="3.5" y="4.5" width="10" height="8" rx="1" fill="#f8fbfe" stroke="#4d8fd0"/><path d="M5 10 L6.5 7.5 L8 10 L9.5 7.5 L11 10" stroke="#4d8fd0" fill="none" stroke-width="0.9"/></svg>
<div class="t" style="font-size:10.5px;color:#000;left:117.70px;top:352.00px;transform:scaleX(0.9532);transform-origin:0 0;">MetaTrader 4</div>
<i class="a" style="left:102px;top:370px;width:7.5px;height:7.5px;border:1px solid #989898;border-radius:1.5px;background:linear-gradient(135deg,#fff,#e4e4e4)"></i>
<i class="a" style="left:104px;top:373.2px;width:3.5px;height:1px;background:#36439a;"></i>
<svg class="a" style="left:115px;top:364.5px;" width="17" height="16" viewBox="0 0 17 16"><path d="M0.5 12.6 q0-5.5 4.5-5.5 t4.5 5.5z" fill="#3cc833" stroke="#1b7a1b" stroke-width="0.6"/><circle cx="5" cy="4.2" r="2.9" fill="#ecb81e" stroke="#b07f10" stroke-width="0.6"/><path d="M5 14.3 q0-6.5 5.6-6.5 t5.6 6.5 q-5.6 1.2 -11.2 0z" fill="#dcb528" stroke="#a8801a" stroke-width="0.6"/><path d="M10.6 8 l1.8 4.5 0.8-3.8z" fill="#f8f2d0" fill-opacity=".8"/><circle cx="10.6" cy="4.8" r="3.2" fill="#f0c030" stroke="#b07f10" stroke-width="0.6"/></svg>
<div class="t" style="font-size:10.5px;color:#000;left:135.70px;top:367.00px;transform:scaleX(0.9215);transform-origin:0 0;">Számlák</div>
<i class="a" style="left:120px;top:386px;width:7.5px;height:7.5px;border:1px solid #989898;border-radius:1.5px;background:linear-gradient(135deg,#fff,#e4e4e4)"></i>
<i class="a" style="left:122px;top:389.2px;width:3.5px;height:1px;background:#36439a;"></i>
<svg class="a" style="left:136px;top:381px;" width="11" height="14" viewBox="0 0 11 14"><path d="M0.6 1.6 L7.4 0.5 L10.2 1.8 L10.2 12.2 L3.6 13.6 L0.6 12Z" fill="#1f9af2" stroke="#1673c4" stroke-width="0.7"/><path d="M0.6 1.6 L7.4 0.5 L10.2 1.8 L3.6 3Z" fill="#a9dcfb"/><path d="M0.6 1.6 L3.6 3 L3.6 13.6 L0.6 12Z" fill="#0f7fde"/><path d="M5.2 5h3.6M5.2 7h3.6" stroke="#8fd0fa" stroke-width="0.9"/><rect x="7.4" y="9.6" width="1.3" height="1.3" fill="#e4d24a"/></svg>
<div class="t" style="font-size:10.5px;color:#000;left:153.80px;top:383.00px;transform:scaleX(0.9497);transform-origin:0 0;">OIG-Demo</div>
<svg class="a" style="left:153.5px;top:396px;" width="13" height="13" viewBox="0 0 13 13"><path d="M0.8 12.6 q-0.3-6 5.7-6 t5.7 6 q-5.7 1.2 -11.4 0z" fill="#3cc833" stroke="#1b7a1b" stroke-width="0.7"/><path d="M6.5 6.8 l1.6 4.2 1-3.6z" fill="#f4f4e4" fill-opacity=".8"/><circle cx="6.3" cy="3.7" r="3" fill="#ecb81e" stroke="#b07f10" stroke-width="0.7"/></svg>
<div class="t" style="font-size:10.5px;color:#000;left:171.80px;top:398.00px;transform:scaleX(0.8905);transform-origin:0 0;">2088725058: Kövess teszt</div>
<i class="a" style="left:120px;top:417px;width:7.5px;height:7.5px;border:1px solid #989898;border-radius:1.5px;background:linear-gradient(135deg,#fff,#e4e4e4)"></i>
<i class="a" style="left:122px;top:420.2px;width:3.5px;height:1px;background:#36439a;"></i>
<svg class="a" style="left:136px;top:412px;" width="11" height="14" viewBox="0 0 11 14"><path d="M0.6 1.6 L7.4 0.5 L10.2 1.8 L10.2 12.2 L3.6 13.6 L0.6 12Z" fill="#1f9af2" stroke="#1673c4" stroke-width="0.7"/><path d="M0.6 1.6 L7.4 0.5 L10.2 1.8 L3.6 3Z" fill="#a9dcfb"/><path d="M0.6 1.6 L3.6 3 L3.6 13.6 L0.6 12Z" fill="#0f7fde"/><path d="M5.2 5h3.6M5.2 7h3.6" stroke="#8fd0fa" stroke-width="0.9"/><rect x="7.4" y="9.6" width="1.3" height="1.3" fill="#e4d24a"/></svg>
<div class="t" style="font-size:10.5px;color:#000;left:153.80px;top:414.00px;transform:scaleX(0.9332);transform-origin:0 0;">OIG-Live</div>
<svg class="a" style="left:153.5px;top:427px;" width="13" height="13" viewBox="0 0 13 13"><path d="M0.8 12.6 q-0.3-6 5.7-6 t5.7 6 q-5.7 1.2 -11.4 0z" fill="#dcb528" stroke="#a8801a" stroke-width="0.7"/><path d="M6.5 6.8 l1.6 4.2 1-3.6z" fill="#f4f4e4" fill-opacity=".8"/><circle cx="6.3" cy="3.7" r="3" fill="#ecb81e" stroke="#b07f10" stroke-width="0.7"/></svg>
<div class="t" style="font-size:10.5px;color:#000;left:171.80px;top:429.00px;transform:scaleX(0.8905);transform-origin:0 0;">2100036268: Kovess teszt</div>
<i class="a" style="left:102px;top:448px;width:7.5px;height:7.5px;border:1px solid #989898;border-radius:1.5px;background:linear-gradient(135deg,#fff,#e4e4e4)"></i>
<i class="a" style="left:104px;top:451.2px;width:3.5px;height:1px;background:#36439a;"></i>
<i class="a" style="left:105.2px;top:450px;width:1px;height:3.5px;background:#36439a;"></i>
<i class="a" style="left:117px;top:443px;width:12px;height:13px;background:linear-gradient(135deg,#ffe680,#f2b71e);border:1px solid #c8962a;border-radius:2px"></i>
<div class="t" style="font-size:10px;color:#7a5200;font-weight:bold;left:121.00px;top:446.00px;font-style:italic;">f</div>
<div class="t" style="font-size:10.5px;color:#000;left:135.70px;top:444.00px;">Indikátorok</div>
<i class="a" style="left:102px;top:464px;width:7.5px;height:7.5px;border:1px solid #989898;border-radius:1.5px;background:linear-gradient(135deg,#fff,#e4e4e4)"></i>
<i class="a" style="left:104px;top:467.2px;width:3.5px;height:1px;background:#36439a;"></i>
<svg class="a" style="left:116.5px;top:459px;" width="15" height="14" viewBox="0 0 15 14"><path d="M3.6 6 q3.2 5.5 6.8 0z" fill="#f4d23e" stroke="#b8921c" stroke-width="0.6"/><ellipse cx="7" cy="5" rx="6.8" ry="2.5" fill="#3f9ad8" stroke="#2b72b0" stroke-width="0.6"/><path d="M3.4 4.4 q0.6-4 3.6-4 t3.6 4 q-3.6 1.5 -7.2 0z" fill="#6fbdf0" stroke="#2b72b0" stroke-width="0.6"/><path d="M10.8 7.4 l2.6 2.6 -2.6 2.6 -2.6-2.6z" fill="#f2c63c" stroke="#b08a1a" stroke-width="0.6"/></svg>
<div class="t" style="font-size:10.5px;color:#000;left:135.70px;top:459.00px;transform:scaleX(0.9099);transform-origin:0 0;">Expertek</div>
<svg class="a" style="left:134.5px;top:474px;" width="15" height="14" viewBox="0 0 15 14"><path d="M3.6 6 q3.2 5.5 6.8 0z" fill="#f4d23e" stroke="#b8921c" stroke-width="0.6"/><ellipse cx="7" cy="5" rx="6.8" ry="2.5" fill="#3f9ad8" stroke="#2b72b0" stroke-width="0.6"/><path d="M3.4 4.4 q0.6-4 3.6-4 t3.6 4 q-3.6 1.5 -7.2 0z" fill="#6fbdf0" stroke="#2b72b0" stroke-width="0.6"/><path d="M10.8 7.4 l2.6 2.6 -2.6 2.6 -2.6-2.6z" fill="#b8b8b8" stroke="#6a6a6a" stroke-width="0.6"/></svg>
<div class="t" style="font-size:10.5px;color:#000;left:153.80px;top:475.00px;transform:scaleX(0.8806);transform-origin:0 0;">Kovess_EA_Client_v2.1</div>
<svg class="a" style="left:134.5px;top:490px;" width="15" height="14" viewBox="0 0 15 14"><path d="M3.6 6 q3.2 5.5 6.8 0z" fill="#f4d23e" stroke="#b8921c" stroke-width="0.6"/><ellipse cx="7" cy="5" rx="6.8" ry="2.5" fill="#3f9ad8" stroke="#2b72b0" stroke-width="0.6"/><path d="M3.4 4.4 q0.6-4 3.6-4 t3.6 4 q-3.6 1.5 -7.2 0z" fill="#6fbdf0" stroke="#2b72b0" stroke-width="0.6"/><path d="M10.8 7.4 l2.6 2.6 -2.6 2.6 -2.6-2.6z" fill="#f2c63c" stroke="#b08a1a" stroke-width="0.6"/></svg>
<div class="t" style="font-size:10.5px;color:#000;left:153.80px;top:490.00px;transform:scaleX(0.9534);transform-origin:0 0;">MACD Sample</div>
<div class="a" style="left:94px;top:503px;width:194px;height:12px;overflow:hidden"><svg class="a" style="left:40.5px;top:2px;" width="15" height="14" viewBox="0 0 15 14"><path d="M3.6 6 q3.2 5.5 6.8 0z" fill="#f4d23e" stroke="#b8921c" stroke-width="0.6"/><ellipse cx="7" cy="5" rx="6.8" ry="2.5" fill="#3f9ad8" stroke="#2b72b0" stroke-width="0.6"/><path d="M3.4 4.4 q0.6-4 3.6-4 t3.6 4 q-3.6 1.5 -7.2 0z" fill="#6fbdf0" stroke="#2b72b0" stroke-width="0.6"/><path d="M10.8 7.4 l2.6 2.6 -2.6 2.6 -2.6-2.6z" fill="#f2c63c" stroke="#b08a1a" stroke-width="0.6"/></svg><div class="t" style="font-size:10.5px;color:#000;left:59.80px;top:3.00px;transform:scaleX(0.9947);transform-origin:0 0;">Moving Average</div></div>
<i class="a" style="left:287.5px;top:349px;width:14.5px;height:166px;background:#f0f0f0;"></i>
<i class="a" style="left:288.4px;top:365px;width:12px;height:112px;background:linear-gradient(90deg,#f6f6f6 0,#e8e8e8 50%,#d4d4d4 100%);border:1px solid #a2a2a2;border-radius:2px"></i>
<i class="a" style="left:291.4px;top:418px;width:6px;height:1px;background:#7a7a7a;"></i>
<i class="a" style="left:291.4px;top:420px;width:6px;height:1px;background:#7a7a7a;"></i>
<i class="a" style="left:291.4px;top:422px;width:6px;height:1px;background:#7a7a7a;"></i>
<svg class="a" style="left:290.9px;top:353px;" width="7" height="5" viewBox="0 0 7 5"><path d="M0.4 4.4 L3.5 0.8 L6.6 4.4Z" fill="#6a6a6a"/></svg>
<svg class="a" style="left:290.9px;top:504.5px;" width="7" height="5" viewBox="0 0 7 5"><path d="M0.4 0.6 L3.5 4.2 L6.6 0.6Z" fill="#6a6a6a"/></svg>
<i class="a" style="left:94px;top:515px;width:210px;height:1px;background:#3a3a3a;"></i>
<i class="a" style="left:95px;top:515px;width:61px;height:17px;background:#fff;border:1px solid #3a3a3a;border-top:0"></i>
<div class="t" style="font-size:10.5px;color:#000;left:105.00px;top:517.00px;transform:scaleX(0.9608);transform-origin:0 0;">Általános</div>
<div class="t" style="font-size:10.5px;color:#8a8a8a;left:164.00px;top:517.00px;transform:scaleX(0.9394);transform-origin:0 0;">Kedvencek</div>
<i class="a" style="left:221px;top:518px;width:1px;height:12px;background:#8a8a8a;"></i>
<i class="a" style="left:307px;top:136px;width:880px;height:382px;background:#000;"></i>
<i class="a" style="left:304.5px;top:136px;width:2.7px;height:382px;background:linear-gradient(90deg,#e8e8e8,#8a8a8a 60%,#222)"></i>
<i class="a" style="left:406.0px;top:139px;width:1px;height:361px;background:repeating-linear-gradient(180deg,#fff 0 2.57px,transparent 2.57px 5.143px);opacity:.84"></i>
<i class="a" style="left:584.3px;top:139px;width:1px;height:361px;background:repeating-linear-gradient(180deg,#fff 0 2.57px,transparent 2.57px 5.143px);opacity:.84"></i>
<i class="a" style="left:762.6px;top:139px;width:1px;height:361px;background:repeating-linear-gradient(180deg,#fff 0 2.57px,transparent 2.57px 5.143px);opacity:.84"></i>
<i class="a" style="left:940.9px;top:139px;width:1px;height:361px;background:repeating-linear-gradient(180deg,#fff 0 2.57px,transparent 2.57px 5.143px);opacity:.84"></i>
<i class="a" style="left:1147.0px;top:139px;width:1px;height:361px;background:repeating-linear-gradient(180deg,#fff 0 2.57px,transparent 2.57px 5.143px);opacity:.84"></i>
<i class="a" style="left:311px;top:203px;width:144.6px;height:121.2px;background:#0000ff;"></i>
<svg class="a" style="left:310px;top:139px" width="841" height="361" viewBox="310 139 841 361" shape-rendering="geometricPrecision"><rect x="310" y="173" width="0.8" height="19.2" fill="#00e400"/><rect x="310.6" y="203" width="1" height="26.8" fill="#00e400"/><rect x="310" y="228.6" width="1.4" height="1" fill="#00e400"/><rect x="316.90" y="150.0" width="0.9" height="55.0" fill="#00e400"/><rect x="315.60" y="150.4" width="3.5" height="50.2" fill="#fff" stroke="#00e400" stroke-width="0.9"/><rect x="323.75" y="150.0" width="0.9" height="45.0" fill="#00e400"/><rect x="322.45" y="150.4" width="3.5" height="39.2" fill="#000" stroke="#00e400" stroke-width="0.9"/><rect x="330.61" y="150.0" width="0.9" height="48.0" fill="#00e400"/><rect x="329.31" y="150.4" width="3.5" height="44.2" fill="#fff" stroke="#00e400" stroke-width="0.9"/><rect x="337.47" y="150.0" width="0.9" height="46.0" fill="#00e400"/><rect x="336.17" y="150.4" width="3.5" height="39.2" fill="#000" stroke="#00e400" stroke-width="0.9"/><rect x="344.33" y="150.0" width="0.9" height="49.0" fill="#00e400"/><rect x="343.03" y="150.4" width="3.5" height="45.2" fill="#fff" stroke="#00e400" stroke-width="0.9"/><rect x="351.19" y="150.0" width="0.9" height="47.0" fill="#00e400"/><rect x="349.89" y="150.4" width="3.5" height="41.2" fill="#000" stroke="#00e400" stroke-width="0.9"/><rect x="358.04" y="150.0" width="0.9" height="53.8" fill="#00e400"/><rect x="356.74" y="150.4" width="3.5" height="49.2" fill="#fff" stroke="#00e400" stroke-width="0.9"/><rect x="364.90" y="150.0" width="0.9" height="49.0" fill="#00e400"/><rect x="363.60" y="150.4" width="3.5" height="43.2" fill="#000" stroke="#00e400" stroke-width="0.9"/><rect x="371.76" y="176.0" width="0.9" height="52.5" fill="#00e400"/><rect x="370.46" y="180.4" width="3.5" height="43.9" fill="#fff" stroke="#00e400" stroke-width="0.9"/><rect x="378.62" y="220.4" width="0.9" height="8.3" fill="#00e400"/><rect x="377.32" y="222.0" width="3.5" height="6.3" fill="#000" stroke="#00e400" stroke-width="0.9"/><rect x="385.48" y="217.9" width="0.9" height="20.0" fill="#00e400"/><rect x="384.18" y="222.4" width="3.5" height="1.9" fill="#fff" stroke="#00e400" stroke-width="0.9"/><rect x="392.33" y="222.0" width="0.9" height="27.0" fill="#00e400"/><rect x="391.03" y="225.1" width="3.5" height="14.5" fill="#fff" stroke="#00e400" stroke-width="0.9"/><rect x="399.19" y="234.0" width="0.9" height="14.4" fill="#00e400"/><rect x="397.89" y="237.8" width="3.5" height="2.1" fill="#000" stroke="#00e400" stroke-width="0.9"/><rect x="406.05" y="218.5" width="0.9" height="27.5" fill="#00e400"/><rect x="404.75" y="221.7" width="3.5" height="15.1" fill="#000" stroke="#00e400" stroke-width="0.9"/><rect x="412.91" y="190.0" width="0.9" height="50.3" fill="#00e400"/><rect x="411.61" y="221.4" width="3.5" height="18.5" fill="#fff" stroke="#00e400" stroke-width="0.9"/><rect x="419.77" y="236.2" width="0.9" height="3.5" fill="#00e400"/><rect x="418.02" y="237.0" width="4.4" height="0.95" fill="#00e400"/><rect x="426.62" y="227.8" width="0.9" height="16.9" fill="#00e400"/><rect x="425.32" y="237.0" width="3.5" height="2.9" fill="#fff" stroke="#00e400" stroke-width="0.9"/><rect x="433.48" y="195.0" width="0.9" height="49.0" fill="#00e400"/><rect x="432.18" y="198.4" width="3.5" height="41.5" fill="#000" stroke="#00e400" stroke-width="0.9"/><rect x="440.34" y="196.0" width="0.9" height="14.7" fill="#00e400"/><rect x="439.04" y="199.4" width="3.5" height="6.2" fill="#fff" stroke="#00e400" stroke-width="0.9"/><rect x="447.20" y="200.0" width="0.9" height="8.0" fill="#00e400"/><rect x="445.90" y="203.4" width="3.5" height="2.2" fill="#000" stroke="#00e400" stroke-width="0.9"/><rect x="454.06" y="198.0" width="0.9" height="23.4" fill="#00e400"/><rect x="452.76" y="200.4" width="3.5" height="8.5" fill="#fff" stroke="#00e400" stroke-width="0.9"/><rect x="460.91" y="203.0" width="0.9" height="6.0" fill="#00e400"/><rect x="459.61" y="205.4" width="3.5" height="3.2" fill="#000" stroke="#00e400" stroke-width="0.9"/><rect x="467.77" y="201.0" width="0.9" height="16.4" fill="#00e400"/><rect x="466.47" y="204.7" width="3.5" height="1.1" fill="#000" stroke="#00e400" stroke-width="0.9"/><rect x="474.63" y="202.0" width="0.9" height="17.7" fill="#00e400"/><rect x="473.33" y="205.4" width="3.5" height="7.9" fill="#fff" stroke="#00e400" stroke-width="0.9"/><rect x="481.49" y="192.2" width="0.9" height="23.4" fill="#00e400"/><rect x="480.19" y="203.8" width="3.5" height="9.5" fill="#000" stroke="#00e400" stroke-width="0.9"/><rect x="488.35" y="188.5" width="0.9" height="25.2" fill="#00e400"/><rect x="486.60" y="202.6" width="4.4" height="0.95" fill="#00e400"/><rect x="495.20" y="202.2" width="0.9" height="38.3" fill="#00e400"/><rect x="493.90" y="202.6" width="3.5" height="36.3" fill="#fff" stroke="#00e400" stroke-width="0.9"/><rect x="502.06" y="235.5" width="0.9" height="4.4" fill="#00e400"/><rect x="500.31" y="237.6" width="4.4" height="0.95" fill="#00e400"/><rect x="508.92" y="222.2" width="0.9" height="18.3" fill="#00e400"/><rect x="507.62" y="230.3" width="3.5" height="6.9" fill="#000" stroke="#00e400" stroke-width="0.9"/><rect x="515.78" y="216.2" width="0.9" height="24.8" fill="#00e400"/><rect x="514.48" y="230.3" width="3.5" height="8.6" fill="#fff" stroke="#00e400" stroke-width="0.9"/><rect x="522.64" y="222.2" width="0.9" height="28.3" fill="#00e400"/><rect x="521.34" y="225.6" width="3.5" height="13.3" fill="#000" stroke="#00e400" stroke-width="0.9"/><rect x="529.49" y="199.0" width="0.9" height="27.4" fill="#00e400"/><rect x="528.19" y="218.1" width="3.5" height="6.2" fill="#000" stroke="#00e400" stroke-width="0.9"/><rect x="536.35" y="205.0" width="0.9" height="18.7" fill="#00e400"/><rect x="535.05" y="212.2" width="3.5" height="5.4" fill="#000" stroke="#00e400" stroke-width="0.9"/><rect x="543.21" y="205.0" width="0.9" height="7.4" fill="#00e400"/><rect x="541.91" y="207.2" width="3.5" height="3.6" fill="#000" stroke="#00e400" stroke-width="0.9"/><rect x="550.07" y="190.0" width="0.9" height="23.0" fill="#00e400"/><rect x="548.77" y="201.9" width="3.5" height="4.3" fill="#000" stroke="#00e400" stroke-width="0.9"/><rect x="556.93" y="198.0" width="0.9" height="27.0" fill="#00e400"/><rect x="555.63" y="202.2" width="3.5" height="11.7" fill="#fff" stroke="#00e400" stroke-width="0.9"/><rect x="563.78" y="206.2" width="0.9" height="22.5" fill="#00e400"/><rect x="562.48" y="212.2" width="3.5" height="1.7" fill="#000" stroke="#00e400" stroke-width="0.9"/><rect x="570.64" y="201.2" width="0.9" height="21.2" fill="#00e400"/><rect x="569.34" y="212.6" width="3.5" height="0.7" fill="#fff" stroke="#00e400" stroke-width="0.9"/><rect x="577.50" y="201.2" width="0.9" height="38.4" fill="#00e400"/><rect x="576.20" y="212.2" width="3.5" height="1.4" fill="#000" stroke="#00e400" stroke-width="0.9"/><rect x="584.36" y="204.3" width="0.9" height="7.5" fill="#00e400"/><rect x="582.61" y="208.0" width="4.4" height="0.95" fill="#00e400"/><rect x="591.22" y="204.8" width="0.9" height="14.2" fill="#00e400"/><rect x="589.92" y="208.9" width="3.5" height="8.8" fill="#fff" stroke="#00e400" stroke-width="0.9"/><rect x="598.07" y="205.5" width="0.9" height="40.2" fill="#00e400"/><rect x="596.32" y="217.2" width="4.4" height="0.95" fill="#00e400"/><rect x="604.93" y="207.9" width="0.9" height="17.1" fill="#00e400"/><rect x="603.63" y="217.6" width="3.5" height="0.7" fill="#fff" stroke="#00e400" stroke-width="0.9"/><rect x="611.79" y="217.2" width="0.9" height="33.8" fill="#00e400"/><rect x="610.49" y="219.1" width="3.5" height="24.2" fill="#fff" stroke="#00e400" stroke-width="0.9"/><rect x="618.65" y="218.2" width="0.9" height="40.6" fill="#00e400"/><rect x="617.35" y="222.6" width="3.5" height="20.7" fill="#000" stroke="#00e400" stroke-width="0.9"/><rect x="625.51" y="221.6" width="0.9" height="8.1" fill="#00e400"/><rect x="623.76" y="222.4" width="4.4" height="0.95" fill="#00e400"/><rect x="632.36" y="219.7" width="0.9" height="28.7" fill="#00e400"/><rect x="631.06" y="223.2" width="3.5" height="20.8" fill="#fff" stroke="#00e400" stroke-width="0.9"/><rect x="639.22" y="244.4" width="0.9" height="35.3" fill="#00e400"/><rect x="637.92" y="244.8" width="3.5" height="31.0" fill="#fff" stroke="#00e400" stroke-width="0.9"/><rect x="646.08" y="274.0" width="0.9" height="23.0" fill="#00e400"/><rect x="644.78" y="276.7" width="3.5" height="17.4" fill="#fff" stroke="#00e400" stroke-width="0.9"/><rect x="652.94" y="276.0" width="0.9" height="28.7" fill="#00e400"/><rect x="651.64" y="279.9" width="3.5" height="14.2" fill="#000" stroke="#00e400" stroke-width="0.9"/><rect x="659.80" y="277.0" width="0.9" height="32.7" fill="#00e400"/><rect x="658.50" y="279.9" width="3.5" height="29.4" fill="#fff" stroke="#00e400" stroke-width="0.9"/><rect x="666.65" y="308.4" width="0.9" height="4.0" fill="#00e400"/><rect x="665.35" y="310.4" width="3.5" height="1.6" fill="#fff" stroke="#00e400" stroke-width="0.9"/><rect x="673.51" y="293.2" width="0.9" height="20.2" fill="#00e400"/><rect x="672.21" y="294.4" width="3.5" height="18.0" fill="#000" stroke="#00e400" stroke-width="0.9"/><rect x="680.37" y="288.2" width="0.9" height="22.5" fill="#00e400"/><rect x="679.07" y="294.9" width="3.5" height="13.4" fill="#fff" stroke="#00e400" stroke-width="0.9"/><rect x="687.23" y="296.3" width="0.9" height="19.6" fill="#00e400"/><rect x="685.48" y="308.4" width="4.4" height="0.95" fill="#00e400"/><rect x="694.09" y="282.8" width="0.9" height="48.7" fill="#00e400"/><rect x="692.79" y="309.2" width="3.5" height="16.6" fill="#fff" stroke="#00e400" stroke-width="0.9"/><rect x="700.94" y="325.9" width="0.9" height="27.8" fill="#00e400"/><rect x="699.64" y="326.3" width="3.5" height="21.0" fill="#fff" stroke="#00e400" stroke-width="0.9"/><rect x="707.80" y="342.8" width="0.9" height="4.9" fill="#00e400"/><rect x="706.05" y="344.4" width="4.4" height="0.95" fill="#00e400"/><rect x="714.66" y="337.1" width="0.9" height="16.6" fill="#00e400"/><rect x="713.36" y="345.0" width="3.5" height="3.2" fill="#fff" stroke="#00e400" stroke-width="0.9"/><rect x="721.52" y="335.0" width="0.9" height="21.5" fill="#00e400"/><rect x="720.22" y="342.5" width="3.5" height="5.7" fill="#000" stroke="#00e400" stroke-width="0.9"/><rect x="728.38" y="319.0" width="0.9" height="28.7" fill="#00e400"/><rect x="727.08" y="333.8" width="3.5" height="9.4" fill="#000" stroke="#00e400" stroke-width="0.9"/><rect x="735.23" y="320.3" width="0.9" height="24.1" fill="#00e400"/><rect x="733.93" y="333.8" width="3.5" height="4.8" fill="#fff" stroke="#00e400" stroke-width="0.9"/><rect x="742.09" y="301.6" width="0.9" height="38.3" fill="#00e400"/><rect x="740.79" y="304.8" width="3.5" height="33.8" fill="#000" stroke="#00e400" stroke-width="0.9"/><rect x="748.95" y="302.4" width="0.9" height="6.3" fill="#00e400"/><rect x="747.20" y="304.9" width="4.4" height="0.95" fill="#00e400"/><rect x="755.81" y="305.3" width="0.9" height="18.4" fill="#00e400"/><rect x="754.51" y="305.7" width="3.5" height="4.5" fill="#fff" stroke="#00e400" stroke-width="0.9"/><rect x="762.67" y="271.7" width="0.9" height="42.8" fill="#00e400"/><rect x="761.37" y="277.5" width="3.5" height="31.9" fill="#000" stroke="#00e400" stroke-width="0.9"/><rect x="769.52" y="250.3" width="0.9" height="29.4" fill="#00e400"/><rect x="768.22" y="262.6" width="3.5" height="14.7" fill="#000" stroke="#00e400" stroke-width="0.9"/><rect x="776.38" y="249.4" width="0.9" height="26.3" fill="#00e400"/><rect x="775.08" y="260.0" width="3.5" height="2.1" fill="#000" stroke="#00e400" stroke-width="0.9"/><rect x="783.24" y="244.4" width="0.9" height="23.4" fill="#00e400"/><rect x="781.94" y="244.8" width="3.5" height="14.6" fill="#000" stroke="#00e400" stroke-width="0.9"/><rect x="790.10" y="259.5" width="0.9" height="18.9" fill="#00e400"/><rect x="788.80" y="262.9" width="3.5" height="15.1" fill="#000" stroke="#00e400" stroke-width="0.9"/><rect x="796.96" y="255.4" width="0.9" height="33.4" fill="#00e400"/><rect x="795.66" y="262.8" width="3.5" height="16.3" fill="#fff" stroke="#00e400" stroke-width="0.9"/><rect x="803.81" y="272.6" width="0.9" height="24.6" fill="#00e400"/><rect x="802.51" y="279.9" width="3.5" height="11.4" fill="#fff" stroke="#00e400" stroke-width="0.9"/><rect x="810.67" y="182.2" width="0.9" height="152.4" fill="#00e400"/><rect x="809.37" y="291.7" width="3.5" height="38.4" fill="#fff" stroke="#00e400" stroke-width="0.9"/><rect x="817.53" y="316.3" width="0.9" height="34.7" fill="#00e400"/><rect x="816.23" y="330.8" width="3.5" height="11.1" fill="#fff" stroke="#00e400" stroke-width="0.9"/><rect x="824.39" y="328.2" width="0.9" height="36.5" fill="#00e400"/><rect x="823.09" y="342.6" width="3.5" height="14.6" fill="#fff" stroke="#00e400" stroke-width="0.9"/><rect x="831.25" y="360.0" width="0.9" height="9.4" fill="#00e400"/><rect x="829.95" y="363.6" width="3.5" height="4.4" fill="#fff" stroke="#00e400" stroke-width="0.9"/><rect x="838.10" y="366.2" width="0.9" height="45.9" fill="#00e400"/><rect x="836.80" y="368.6" width="3.5" height="28.5" fill="#fff" stroke="#00e400" stroke-width="0.9"/><rect x="844.96" y="369.4" width="0.9" height="41.2" fill="#00e400"/><rect x="843.66" y="397.8" width="3.5" height="7.4" fill="#fff" stroke="#00e400" stroke-width="0.9"/><rect x="851.82" y="391.9" width="0.9" height="36.6" fill="#00e400"/><rect x="850.52" y="406.2" width="3.5" height="5.9" fill="#fff" stroke="#00e400" stroke-width="0.9"/><rect x="858.68" y="397.1" width="0.9" height="50.3" fill="#00e400"/><rect x="857.38" y="412.9" width="3.5" height="32.3" fill="#fff" stroke="#00e400" stroke-width="0.9"/><rect x="865.54" y="437.2" width="0.9" height="28.7" fill="#00e400"/><rect x="864.24" y="446.0" width="3.5" height="11.0" fill="#fff" stroke="#00e400" stroke-width="0.9"/><rect x="872.39" y="455.9" width="0.9" height="6.5" fill="#00e400"/><rect x="871.09" y="457.6" width="3.5" height="2.8" fill="#fff" stroke="#00e400" stroke-width="0.9"/><rect x="879.25" y="434.7" width="0.9" height="26.1" fill="#00e400"/><rect x="877.95" y="439.7" width="3.5" height="20.7" fill="#000" stroke="#00e400" stroke-width="0.9"/><rect x="886.11" y="431.2" width="0.9" height="29.6" fill="#00e400"/><rect x="884.81" y="439.7" width="3.5" height="0.9" fill="#fff" stroke="#00e400" stroke-width="0.9"/><rect x="892.97" y="436.2" width="0.9" height="47.2" fill="#00e400"/><rect x="891.67" y="441.6" width="3.5" height="34.1" fill="#fff" stroke="#00e400" stroke-width="0.9"/><rect x="899.83" y="459.3" width="0.9" height="26.6" fill="#00e400"/><rect x="898.53" y="469.7" width="3.5" height="6.0" fill="#000" stroke="#00e400" stroke-width="0.9"/><rect x="906.68" y="443.0" width="0.9" height="35.0" fill="#00e400"/><rect x="905.38" y="456.8" width="3.5" height="12.1" fill="#000" stroke="#00e400" stroke-width="0.9"/><rect x="913.54" y="450.2" width="0.9" height="10.6" fill="#00e400"/><rect x="912.24" y="450.6" width="3.5" height="2.7" fill="#000" stroke="#00e400" stroke-width="0.9"/><rect x="920.40" y="420.0" width="0.9" height="48.6" fill="#00e400"/><rect x="919.10" y="447.2" width="3.5" height="2.9" fill="#000" stroke="#00e400" stroke-width="0.9"/><rect x="927.26" y="433.0" width="0.9" height="35.0" fill="#00e400"/><rect x="925.96" y="436.0" width="3.5" height="11.0" fill="#000" stroke="#00e400" stroke-width="0.9"/><rect x="934.12" y="428.0" width="0.9" height="45.0" fill="#00e400"/><rect x="932.82" y="436.3" width="3.5" height="21.6" fill="#fff" stroke="#00e400" stroke-width="0.9"/><rect x="940.97" y="426.2" width="0.9" height="33.7" fill="#00e400"/><rect x="939.67" y="430.1" width="3.5" height="27.9" fill="#000" stroke="#00e400" stroke-width="0.9"/><rect x="947.83" y="419.1" width="0.9" height="25.8" fill="#00e400"/><rect x="946.08" y="429.2" width="4.4" height="0.95" fill="#00e400"/><rect x="954.69" y="453.7" width="0.9" height="37.2" fill="#00e400"/><rect x="953.39" y="455.9" width="3.5" height="10.2" fill="#fff" stroke="#00e400" stroke-width="0.9"/><rect x="961.55" y="377.2" width="0.9" height="101.7" fill="#00e400"/><rect x="960.25" y="393.2" width="3.5" height="73.2" fill="#000" stroke="#00e400" stroke-width="0.9"/><rect x="968.41" y="381.5" width="0.9" height="25.4" fill="#00e400"/><rect x="967.11" y="393.8" width="3.5" height="8.9" fill="#fff" stroke="#00e400" stroke-width="0.9"/></svg>
<i class="a" style="left:309px;top:138px;width:842px;height:1px;background:#e4e4e4;"></i>
<i class="a" style="left:309px;top:138px;width:1px;height:363px;background:#e4e4e4;"></i>
<i class="a" style="left:309px;top:500px;width:842px;height:1px;background:#e4e4e4;"></i>
<i class="a" style="left:1150.3px;top:138px;width:1px;height:363px;background:#c8c8c8;"></i>
<svg class="a" style="left:310px;top:400px;" width="838" height="3" viewBox="0 0 838 3"><path d="M0.3 1.5 H838" stroke="#22c422" stroke-width="1.1" stroke-dasharray="7.9 4.95 2.75 4.97"/></svg>
<i class="a" style="left:310px;top:402.8px;width:841px;height:1.1px;background:#7f8ea0;"></i>
<svg class="a" style="left:963.5px;top:399.5px;" width="4" height="7" viewBox="0 0 4 7"><path d="M3.5 0.5 L0.8 3 L3.5 6" fill="none" stroke="#fff" stroke-width="1"/></svg>
<div class="t" style="font-size:8.6px;color:#fff;left:315.00px;top:393.00px;transform:scaleX(0.9525);transform-origin:0 0;">#39707338 buy 1.45</div>
<div class="t" style="font-size:8.6px;color:#fff;left:313.60px;top:245.00px;transform:scaleX(0.9458);transform-origin:0 0;">Status   :  Account number OK</div>
<div class="t" style="font-size:8.6px;color:#fff;left:313.60px;top:255.00px;transform:scaleX(0.9460);transform-origin:0 0;">Leverage  :  1 : 500</div>
<div class="t" style="font-size:8.6px;color:#fff;left:313.60px;top:265.00px;transform:scaleX(0.9705);transform-origin:0 0;">Account Type  :  OIG-Live</div>
<div class="t" style="font-size:8.6px;color:#fff;left:313.60px;top:276.00px;transform:scaleX(0.9600);transform-origin:0 0;">Server Time  :  16:29:53</div>
<div class="t" style="font-size:8.6px;color:#fff;left:313.60px;top:286.00px;transform:scaleX(0.9220);transform-origin:0 0;">Account Equity  =  14448.49</div>
<div class="t" style="font-size:8.6px;color:#fff;left:313.60px;top:296.00px;transform:scaleX(0.9049);transform-origin:0 0;">Free Margin      =  14137.1576</div>
<div class="t" style="font-size:8.6px;color:#fff;left:313.60px;top:327.00px;transform:scaleX(0.9173);transform-origin:0 0;">Trade parameters</div>
<i class="a" style="left:313px;top:342px;width:134.2px;height:1px;background:repeating-linear-gradient(90deg,#e8e2d6 0 1.9px,rgba(232,226,214,.45) 1.9px 2.57px);opacity:.72"></i>
<div class="t" style="font-size:8.6px;color:#fff;left:313.60px;top:348.00px;transform:scaleX(0.8193);transform-origin:0 0;">Risk</div>
<div class="t" style="font-size:8.6px;color:#fff;left:363.90px;top:348.00px;">:</div>
<div class="t" style="font-size:8.6px;color:#fff;left:371.60px;top:348.00px;transform:scaleX(0.9819);transform-origin:0 0;">10%</div>
<div class="t" style="font-size:8.6px;color:#fff;left:313.60px;top:358.00px;transform:scaleX(0.9077);transform-origin:0 0;">Calculated lots</div>
<div class="t" style="font-size:8.6px;color:#fff;left:372.40px;top:358.00px;">:</div>
<div class="t" style="font-size:8.6px;color:#fff;left:380.80px;top:358.00px;transform:scaleX(0.8903);transform-origin:0 0;">1.45</div>
<i class="a" style="left:313px;top:373px;width:134.2px;height:1px;background:repeating-linear-gradient(90deg,#e8e2d6 0 1.9px,rgba(232,226,214,.45) 1.9px 2.57px);opacity:.72"></i>
<i class="a" style="left:312px;top:140px;width:166px;height:61.5px;background:#000;"></i>
<svg class="a" style="left:313px;top:142.5px;" width="8" height="5" viewBox="0 0 8 5"><path d="M0.3 4.6 L4 0.4 L7.7 4.6Z" fill="#fff"/></svg>
<i class="a" style="left:312.4px;top:147.3px;width:143px;height:4.4px;background:#2f4f4f;"></i>
<div class="t" style="font-size:8.4px;color:#fff;left:322.50px;top:141.00px;transform:scaleX(0.9703);transform-origin:0 0;">EURUSD,Daily</div>
<div class="t" style="font-size:8.4px;color:#fff;left:383.00px;top:141.00px;transform:scaleX(0.9405);transform-origin:0 0;">1.07582 1.07851 1.07225 1.07303</div>
<i class="a" style="left:312.9px;top:153.6px;width:38.3px;height:18.6px;background:linear-gradient(#f24c4c 0,#e63a3a 55%,#dc2e2e 100%)"></i>
<i class="a" style="left:438.8px;top:153.6px;width:38.9px;height:18.6px;background:linear-gradient(#f24c4c 0,#e63a3a 55%,#dc2e2e 100%)"></i>
<i class="a" style="left:316px;top:170.6px;width:32.5px;height:0.9px;background:#9c1010;"></i>
<i class="a" style="left:316px;top:171.5px;width:32.5px;height:0.8px;background:#f7a0a0;"></i>
<i class="a" style="left:442px;top:170.6px;width:32.5px;height:0.9px;background:#9c1010;"></i>
<i class="a" style="left:442px;top:171.5px;width:32.5px;height:0.8px;background:#f7a0a0;"></i>
<div class="t" style="font-size:10.5px;color:#fff;left:321.00px;top:157.00px;transform:scaleX(0.7786);transform-origin:0 0;">SELL</div>
<div class="t" style="font-size:10.5px;color:#fff;left:447.80px;top:157.00px;transform:scaleX(0.8893);transform-origin:0 0;">BUY</div>
<i class="a" style="left:352.9px;top:153.2px;width:84px;height:17.7px;background:#fff;border:1.2px solid #2a2a2a"></i>
<i class="a" style="left:354.1px;top:154.4px;width:15.4px;height:15.3px;background:linear-gradient(#f6f6f6,#cfcfcf);border-right:1px solid #a8a8a8"></i>
<i class="a" style="left:419.4px;top:154.4px;width:16.3px;height:15.3px;background:linear-gradient(#f6f6f6,#cfcfcf);border-left:1px solid #a8a8a8"></i>
<svg class="a" style="left:358.8px;top:160.3px;" width="6" height="4" viewBox="0 0 6 4"><path d="M0.3 0.5 L3 3.4 L5.7 0.5Z" fill="#3c5a96"/></svg>
<svg class="a" style="left:424.7px;top:159.8px;" width="6" height="4" viewBox="0 0 6 4"><path d="M0.3 3.5 L3 0.6 L5.7 3.5Z" fill="#3c5a96"/></svg>
<div class="t" style="font-size:9.5px;color:#000;left:399.30px;top:157.00px;transform:scaleX(0.9195);transform-origin:0 0;">1.18</div>
<i class="a" style="left:312.9px;top:172.7px;width:81.6px;height:28.2px;background:linear-gradient(#dc2c2c 0,#c41c1c 45%,#a60c0c 100%)"></i>
<i class="a" style="left:396.5px;top:172.7px;width:81.2px;height:28.2px;background:linear-gradient(#dc2c2c 0,#c41c1c 45%,#a60c0c 100%)"></i>
<div class="t" style="font-size:10px;color:#fff;font-weight:bold;left:325.00px;top:188.00px;transform:scaleX(1.0071);transform-origin:0 0;">1.07</div>
<div class="t" style="font-size:27.5px;color:#fff;left:348.80px;top:173.00px;transform:scaleX(0.9122);transform-origin:0 0;">29</div>
<div class="t" style="font-size:10px;color:#fff;font-weight:bold;left:380.60px;top:175.00px;transform:scaleX(0.9711);transform-origin:0 0;">8</div>
<div class="t" style="font-size:10px;color:#fff;font-weight:bold;left:408.80px;top:188.00px;transform:scaleX(0.9866);transform-origin:0 0;">1.07</div>
<div class="t" style="font-size:27.5px;color:#fff;left:433.00px;top:173.00px;transform:scaleX(0.8828);transform-origin:0 0;">31</div>
<div class="t" style="font-size:10px;color:#fff;font-weight:bold;left:464.00px;top:175.00px;transform:scaleX(0.9351);transform-origin:0 0;">7</div>
<div class="t" style="font-size:8.6px;color:#fff;left:1047.60px;top:142.00px;transform:scaleX(0.9365);transform-origin:0 0;">Kovess_EA_Client_v2.1</div>
<svg class="a" style="left:1136px;top:140.5px;" width="10" height="10" viewBox="0 0 10 10"><circle cx="5" cy="5" r="4.2" fill="none" stroke="#fff" stroke-width="0.9"/><circle cx="3.5" cy="3.9" r="0.6" fill="#fff"/><circle cx="6.5" cy="3.9" r="0.6" fill="#fff"/><path d="M2.8 6 Q5 8.2 7.2 6" fill="none" stroke="#fff" stroke-width="0.8"/></svg>
<svg class="a" style="left:977px;top:139px;" width="9" height="4" viewBox="0 0 9 4"><path d="M0 0 H9 L4.5 4Z" fill="#98a3b3"/></svg>
<i class="a" style="left:1151.3px;top:157.6px;width:2px;height:0.9px;background:#d8d8d8;"></i>
<div class="t" style="font-size:8.6px;color:#fff;left:1156.00px;top:154.00px;transform:scaleX(0.8879);transform-origin:0 0;">1.13620</div>
<i class="a" style="left:1151.3px;top:185.9px;width:2px;height:0.9px;background:#d8d8d8;"></i>
<div class="t" style="font-size:8.6px;color:#fff;left:1156.00px;top:182.00px;transform:scaleX(0.8879);transform-origin:0 0;">1.12900</div>
<i class="a" style="left:1151.3px;top:214.2px;width:2px;height:0.9px;background:#d8d8d8;"></i>
<div class="t" style="font-size:8.6px;color:#fff;left:1156.00px;top:211.00px;transform:scaleX(0.8879);transform-origin:0 0;">1.12160</div>
<i class="a" style="left:1151.3px;top:242.6px;width:2px;height:0.9px;background:#d8d8d8;"></i>
<div class="t" style="font-size:8.6px;color:#fff;left:1156.00px;top:239.00px;transform:scaleX(0.9065);transform-origin:0 0;">1.11440</div>
<i class="a" style="left:1151.3px;top:270.8px;width:2px;height:0.9px;background:#d8d8d8;"></i>
<div class="t" style="font-size:8.6px;color:#fff;left:1156.00px;top:267.00px;transform:scaleX(0.8879);transform-origin:0 0;">1.10700</div>
<i class="a" style="left:1151.3px;top:299.1px;width:2px;height:0.9px;background:#d8d8d8;"></i>
<div class="t" style="font-size:8.6px;color:#fff;left:1156.00px;top:296.00px;transform:scaleX(0.8879);transform-origin:0 0;">1.09980</div>
<i class="a" style="left:1151.3px;top:327.40000000000003px;width:2px;height:0.9px;background:#d8d8d8;"></i>
<div class="t" style="font-size:8.6px;color:#fff;left:1156.00px;top:324.00px;transform:scaleX(0.8879);transform-origin:0 0;">1.09240</div>
<i class="a" style="left:1151.3px;top:355.6px;width:2px;height:0.9px;background:#d8d8d8;"></i>
<div class="t" style="font-size:8.6px;color:#fff;left:1156.00px;top:352.00px;transform:scaleX(0.8879);transform-origin:0 0;">1.08520</div>
<i class="a" style="left:1151.3px;top:384.0px;width:2px;height:0.9px;background:#d8d8d8;"></i>
<div class="t" style="font-size:8.6px;color:#fff;left:1156.00px;top:381.00px;transform:scaleX(0.8879);transform-origin:0 0;">1.07800</div>
<i class="a" style="left:1151.3px;top:412.20000000000005px;width:2px;height:0.9px;background:#d8d8d8;"></i>
<div class="t" style="font-size:8.6px;color:#fff;left:1156.00px;top:409.00px;transform:scaleX(0.8879);transform-origin:0 0;">1.07060</div>
<i class="a" style="left:1151.3px;top:440.6px;width:2px;height:0.9px;background:#d8d8d8;"></i>
<div class="t" style="font-size:8.6px;color:#fff;left:1156.00px;top:437.00px;transform:scaleX(0.8879);transform-origin:0 0;">1.06340</div>
<i class="a" style="left:1151.3px;top:468.8px;width:2px;height:0.9px;background:#d8d8d8;"></i>
<div class="t" style="font-size:8.6px;color:#fff;left:1156.00px;top:465.00px;transform:scaleX(0.8879);transform-origin:0 0;">1.05600</div>
<i class="a" style="left:1151.3px;top:497.1px;width:2px;height:0.9px;background:#d8d8d8;"></i>
<div class="t" style="font-size:8.6px;color:#fff;left:1156.00px;top:494.00px;transform:scaleX(0.8879);transform-origin:0 0;">1.04880</div>
<i class="a" style="left:1151.8px;top:398.8px;width:35.4px;height:9.1px;background:#fff;"></i>
<div class="t" style="font-size:8.6px;color:#000;left:1156.00px;top:399.00px;transform:scaleX(0.8879);transform-origin:0 0;">1.07303</div>
<i class="a" style="left:310.0px;top:501px;width:0.9px;height:2.2px;background:#d8d8d8;"></i>
<div class="t" style="font-size:8.6px;color:#fff;left:309.20px;top:504.00px;transform:scaleX(0.9163);transform-origin:0 0;">16 Aug 2016</div>
<i class="a" style="left:364.9px;top:501px;width:0.9px;height:2.2px;background:#d8d8d8;"></i>
<div class="t" style="font-size:8.6px;color:#fff;left:364.06px;top:504.00px;transform:scaleX(0.9163);transform-origin:0 0;">25 Aug 2016</div>
<i class="a" style="left:419.7px;top:501px;width:0.9px;height:2.2px;background:#d8d8d8;"></i>
<div class="t" style="font-size:8.6px;color:#fff;left:418.92px;top:504.00px;transform:scaleX(0.9163);transform-origin:0 0;">4 Sep 2016</div>
<i class="a" style="left:474.6px;top:501px;width:0.9px;height:2.2px;background:#d8d8d8;"></i>
<div class="t" style="font-size:8.6px;color:#fff;left:473.78px;top:504.00px;transform:scaleX(0.9163);transform-origin:0 0;">13 Sep 2016</div>
<i class="a" style="left:529.4px;top:501px;width:0.9px;height:2.2px;background:#d8d8d8;"></i>
<div class="t" style="font-size:8.6px;color:#fff;left:528.64px;top:504.00px;transform:scaleX(0.9163);transform-origin:0 0;">22 Sep 2016</div>
<i class="a" style="left:584.3px;top:501px;width:0.9px;height:2.2px;background:#d8d8d8;"></i>
<div class="t" style="font-size:8.6px;color:#fff;left:583.50px;top:504.00px;transform:scaleX(0.9163);transform-origin:0 0;">2 Oct 2016</div>
<i class="a" style="left:639.2px;top:501px;width:0.9px;height:2.2px;background:#d8d8d8;"></i>
<div class="t" style="font-size:8.6px;color:#fff;left:638.36px;top:504.00px;transform:scaleX(0.9163);transform-origin:0 0;">11 Oct 2016</div>
<i class="a" style="left:694.0px;top:501px;width:0.9px;height:2.2px;background:#d8d8d8;"></i>
<div class="t" style="font-size:8.6px;color:#fff;left:693.22px;top:504.00px;transform:scaleX(0.9163);transform-origin:0 0;">20 Oct 2016</div>
<i class="a" style="left:748.9px;top:501px;width:0.9px;height:2.2px;background:#d8d8d8;"></i>
<div class="t" style="font-size:8.6px;color:#fff;left:748.08px;top:504.00px;transform:scaleX(0.9163);transform-origin:0 0;">30 Oct 2016</div>
<i class="a" style="left:803.7px;top:501px;width:0.9px;height:2.2px;background:#d8d8d8;"></i>
<div class="t" style="font-size:8.6px;color:#fff;left:802.94px;top:504.00px;transform:scaleX(0.9163);transform-origin:0 0;">8 Nov 2016</div>
<i class="a" style="left:858.6px;top:501px;width:0.9px;height:2.2px;background:#d8d8d8;"></i>
<div class="t" style="font-size:8.6px;color:#fff;left:857.80px;top:504.00px;transform:scaleX(0.9163);transform-origin:0 0;">17 Nov 2016</div>
<i class="a" style="left:913.5px;top:501px;width:0.9px;height:2.2px;background:#d8d8d8;"></i>
<div class="t" style="font-size:8.6px;color:#fff;left:912.66px;top:504.00px;transform:scaleX(0.9163);transform-origin:0 0;">27 Nov 2016</div>
<i class="a" style="left:968.3px;top:501px;width:0.9px;height:2.2px;background:#d8d8d8;"></i>
<div class="t" style="font-size:8.6px;color:#fff;left:967.52px;top:504.00px;transform:scaleX(0.9163);transform-origin:0 0;">6 Dec 2016</div>
<i class="a" style="left:307px;top:517.7px;width:882px;height:1.2px;background:#f4f4f4;"></i>
<i class="a" style="left:307px;top:519px;width:882px;height:18px;background:#f0f0f0;"></i>
<i class="a" style="left:307px;top:518.9px;width:4px;height:1.5px;background:#5a5a5a;"></i>
<i class="a" style="left:393px;top:518.9px;width:796px;height:1.6px;background:#8c8c8c;"></i>
<i class="a" style="left:311px;top:518px;width:83px;height:18px;background:#fff;border:1px solid #3a3a3a;border-top:0"></i>
<div class="t" style="font-size:10.5px;color:#000;left:321.60px;top:523.00px;transform:scaleX(0.8698);transform-origin:0 0;">EURUSD,Daily</div>
<div class="t" style="font-size:10.5px;color:#8a8a8a;left:401.80px;top:523.00px;transform:scaleX(0.9128);transform-origin:0 0;">NZDUSD,Daily</div>
<i class="a" style="left:475px;top:522px;width:1px;height:12px;background:#8a8a8a;"></i>
<svg class="a" style="left:1160.8px;top:524.6px;" width="3.4" height="5.4" viewBox="0 0 3.4 5.4"><path d="M3.2 0.2 L0.3 2.7 L3.2 5.2Z" fill="#8e8e8e"/></svg>
<svg class="a" style="left:1177.6px;top:524.6px;" width="3.4" height="5.4" viewBox="0 0 3.4 5.4"><path d="M0.2 0.2 L3.1 2.7 L0.2 5.2Z" fill="#8e8e8e"/></svg>
<i class="a" style="left:91px;top:537px;width:1098px;height:1px;background:#f0f0f0;"></i>
<i class="a" style="left:91px;top:538px;width:13px;height:143px;background:#f0f0f0;"></i>
<svg class="a" style="left:94px;top:542px;" width="7" height="7" viewBox="0 0 7 7"><path d="M1 1 L6 6 M6 1 L1 6" stroke="#111" stroke-width="1.5"/></svg>
<i class="a" style="left:92px;top:552px;width:11.3px;height:129px;background:linear-gradient(#d2deed,#c0d1e6)"></i>
<div class="t" style="left:94px;top:677px;font-size:9.5px;color:#6a7787;transform:rotate(-90deg) scaleX(.93);transform-origin:0 0;">Terminál</div>
<i class="a" style="left:104px;top:540px;width:1083px;height:123px;background:#fff;border:1px solid #a0a0a0;border-bottom:0;border-right-color:#dcdcdc;border-left-color:#b8b8b8"></i>
<i class="a" style="left:105px;top:541px;width:1081px;height:20px;background:linear-gradient(#fff 0,#fdfdfd 55%,#f1f2f4 100%);border-bottom:1px solid #e0e3e8"></i>
<i class="a" style="left:210.5px;top:542px;width:1px;height:18px;background:#e3e6ea;"></i>
<i class="a" style="left:210.5px;top:561px;width:1px;height:17px;background:#e8e8e8;"></i>
<i class="a" style="left:358.5px;top:542px;width:1px;height:18px;background:#e3e6ea;"></i>
<i class="a" style="left:358.5px;top:561px;width:1px;height:17px;background:#e8e8e8;"></i>
<i class="a" style="left:433px;top:542px;width:1px;height:18px;background:#e3e6ea;"></i>
<i class="a" style="left:433px;top:561px;width:1px;height:17px;background:#e8e8e8;"></i>
<i class="a" style="left:490.6px;top:542px;width:1px;height:18px;background:#e3e6ea;"></i>
<i class="a" style="left:490.6px;top:561px;width:1px;height:17px;background:#e8e8e8;"></i>
<i class="a" style="left:564px;top:542px;width:1px;height:18px;background:#e3e6ea;"></i>
<i class="a" style="left:564px;top:561px;width:1px;height:17px;background:#e8e8e8;"></i>
<i class="a" style="left:646.5px;top:542px;width:1px;height:18px;background:#e3e6ea;"></i>
<i class="a" style="left:646.5px;top:561px;width:1px;height:17px;background:#e8e8e8;"></i>
<i class="a" style="left:729.6px;top:542px;width:1px;height:18px;background:#e3e6ea;"></i>
<i class="a" style="left:729.6px;top:561px;width:1px;height:17px;background:#e8e8e8;"></i>
<i class="a" style="left:811.7px;top:542px;width:1px;height:18px;background:#e3e6ea;"></i>
<i class="a" style="left:811.7px;top:561px;width:1px;height:17px;background:#e8e8e8;"></i>
<i class="a" style="left:894px;top:542px;width:1px;height:18px;background:#e3e6ea;"></i>
<i class="a" style="left:894px;top:561px;width:1px;height:17px;background:#e8e8e8;"></i>
<i class="a" style="left:976px;top:542px;width:1px;height:18px;background:#e3e6ea;"></i>
<i class="a" style="left:976px;top:561px;width:1px;height:17px;background:#e8e8e8;"></i>
<i class="a" style="left:1058.5px;top:542px;width:1px;height:18px;background:#e3e6ea;"></i>
<i class="a" style="left:1058.5px;top:561px;width:1px;height:17px;background:#e8e8e8;"></i>
<div class="t" style="font-size:10.5px;color:#000;left:109.70px;top:546.00px;transform:scaleX(0.9512);transform-origin:0 0;">Megbízás</div>
<div class="t" style="font-size:7.5px;color:#555;left:162.50px;top:549.00px;">/</div>
<div class="t" style="font-size:10.5px;color:#000;left:319.00px;top:546.00px;transform:scaleX(1.0277);transform-origin:0 0;">Időpont</div>
<div class="t" style="font-size:10.5px;color:#000;left:404.00px;top:546.00px;transform:scaleX(0.9369);transform-origin:0 0;">Típus</div>
<div class="t" style="font-size:10.5px;color:#000;left:442.60px;top:546.00px;transform:scaleX(0.9180);transform-origin:0 0;">Kötéseg...</div>
<div class="t" style="font-size:10.5px;color:#000;left:496.00px;top:546.00px;transform:scaleX(0.9924);transform-origin:0 0;">Instrumentu...</div>
<div class="t" style="font-size:10.5px;color:#000;left:632.60px;top:546.00px;transform:scaleX(1.0095);transform-origin:0 0;">Ár</div>
<div class="t" style="font-size:10.5px;color:#000;left:705.50px;top:546.00px;transform:scaleX(0.9030);transform-origin:0 0;">S / L</div>
<div class="t" style="font-size:10.5px;color:#000;left:787.00px;top:546.00px;transform:scaleX(0.9555);transform-origin:0 0;">T / P</div>
<div class="t" style="font-size:10.5px;color:#000;left:879.40px;top:546.00px;transform:scaleX(1.0095);transform-origin:0 0;">Ár</div>
<div class="t" style="font-size:10.5px;color:#000;left:940.60px;top:546.00px;transform:scaleX(0.9739);transform-origin:0 0;">Jutalék</div>
<div class="t" style="font-size:10.5px;color:#000;left:1025.00px;top:546.00px;transform:scaleX(0.9557);transform-origin:0 0;">Kamat</div>
<div class="t" style="font-size:10.5px;color:#000;left:1155.50px;top:546.00px;transform:scaleX(1.0406);transform-origin:0 0;">Profit</div>
<svg class="a" style="left:107.5px;top:564px;" width="12" height="12" viewBox="0 0 12 12"><path d="M0.5 0.5h6l3 3v8h-9z" fill="#fff" stroke="#555" stroke-width="0.9"/><path d="M6.5 0.5v3h3" fill="none" stroke="#555" stroke-width="0.8"/><circle cx="8.6" cy="9.3" r="2.5" fill="#3f8fe0" stroke="#1c5cae" stroke-width="0.6"/></svg>
<div class="t" style="font-size:10.5px;color:#000;left:123.70px;top:565.00px;transform:scaleX(0.8627);transform-origin:0 0;">39707338</div>
<div class="t" style="font-size:10.5px;color:#000;left:272.00px;top:565.00px;transform:scaleX(0.8720);transform-origin:0 0;">2016.12.06 16:26:10</div>
<div class="t" style="font-size:10.5px;color:#000;left:414.00px;top:565.00px;transform:scaleX(0.9452);transform-origin:0 0;">buy</div>
<div class="t" style="font-size:10.5px;color:#000;left:470.00px;top:565.00px;transform:scaleX(0.8613);transform-origin:0 0;">1.45</div>
<div class="t" style="font-size:10.5px;color:#000;left:531.00px;top:565.00px;transform:scaleX(0.9657);transform-origin:0 0;">eurusd</div>
<div class="t" style="font-size:10.5px;color:#000;left:610.60px;top:565.00px;transform:scaleX(0.8801);transform-origin:0 0;">1.07356</div>
<div class="t" style="font-size:10.5px;color:#000;left:692.00px;top:565.00px;transform:scaleX(0.8959);transform-origin:0 0;">0.00000</div>
<div class="t" style="font-size:10.5px;color:#000;left:774.40px;top:565.00px;transform:scaleX(0.8854);transform-origin:0 0;">0.00000</div>
<div class="t" style="font-size:10.5px;color:#000;left:857.00px;top:565.00px;transform:scaleX(0.8959);transform-origin:0 0;">1.07298</div>
<div class="t" style="font-size:10.5px;color:#000;left:951.50px;top:565.00px;transform:scaleX(0.8984);transform-origin:0 0;">-7.25</div>
<div class="t" style="font-size:10.5px;color:#000;left:1038.00px;top:565.00px;transform:scaleX(0.8319);transform-origin:0 0;">0.00</div>
<div class="t" style="font-size:10.5px;color:#000;left:1138.00px;top:565.00px;transform:scaleX(0.8734);transform-origin:0 0;">-84.10</div>
<svg class="a" style="left:1173.5px;top:567px;" width="7" height="7" viewBox="0 0 7 7"><path d="M1 1 L6 6 M6 1 L1 6" stroke="#8a8a8a" stroke-width="1.2"/></svg>
<i class="a" style="left:105px;top:578px;width:1081px;height:17.5px;background:#d4d4d4;"></i>
<i class="a" style="left:107.5px;top:581px;width:10.5px;height:11px;background:#fff;border:1px solid #6a6a6a;border-radius:1.5px"></i>
<svg class="a" style="left:109.5px;top:583px;" width="7" height="7" viewBox="0 0 7 7"><path d="M2 0.3h3v3h1.8L3.5 6.7 0.2 3.3H2z" fill="#e8431f" stroke="#9a2508" stroke-width="0.5"/></svg>
<div class="t" style="font-size:10.5px;color:#000;font-weight:bold;left:123.70px;top:581.00px;transform:scaleX(0.9628);transform-origin:0 0;">Egyenleg: 14 541.29 USD  Saját tőke: 14 449.94  Letét: 311.33  Szabad margin: 14 138.61  Margin szint: 4641.32%</div>
<div class="t" style="font-size:10.5px;color:#000;font-weight:bold;left:1135.00px;top:581.00px;transform:scaleX(0.9742);transform-origin:0 0;">-91.35</div>
<i class="a" style="left:104px;top:662px;width:1083px;height:1px;background:#3a3a3a;"></i>
<i class="a" style="left:104px;top:663px;width:1083px;height:18px;background:#f0f0f0;"></i>
<i class="a" style="left:106px;top:662px;width:68.5px;height:18px;background:#fff;border:1px solid #3a3a3a;border-top:0"></i>
<div class="t" style="font-size:10.5px;color:#000;left:115.80px;top:665.00px;transform:scaleX(0.8693);transform-origin:0 0;">Kereskedés</div>
<div class="t" style="font-size:10.5px;color:#8a8a8a;left:182.70px;top:665.00px;transform:scaleX(0.9375);transform-origin:0 0;">Kitettség</div>
<div class="t" style="font-size:10.5px;color:#8a8a8a;left:238.60px;top:665.00px;transform:scaleX(0.9545);transform-origin:0 0;">Számlatörténet</div>
<div class="t" style="font-size:10.5px;color:#8a8a8a;left:323.80px;top:665.00px;transform:scaleX(0.9248);transform-origin:0 0;">Hírek</div>
<div class="t" style="font-size:10.5px;color:#8a8a8a;left:364.80px;top:665.00px;transform:scaleX(0.8939);transform-origin:0 0;">Riasztások</div>
<div class="t" style="font-size:10.5px;color:#8a8a8a;left:428.60px;top:665.00px;transform:scaleX(0.8994);transform-origin:0 0;">Levelesláda</div>
<div class="t" style="font-size:10.5px;color:#8a8a8a;left:503.00px;top:665.00px;transform:scaleX(0.8865);transform-origin:0 0;">Társaság</div>
<div class="t" style="font-size:10.5px;color:#8a8a8a;left:559.70px;top:665.00px;transform:scaleX(0.8959);transform-origin:0 0;">Piac</div>
<div class="t" style="font-size:10.5px;color:#8a8a8a;left:595.50px;top:665.00px;transform:scaleX(0.9335);transform-origin:0 0;">Szignálok</div>
<div class="t" style="font-size:10.5px;color:#8a8a8a;left:656.00px;top:665.00px;transform:scaleX(0.9145);transform-origin:0 0;">Kódbázis</div>
<div class="t" style="font-size:10.5px;color:#8a8a8a;left:713.00px;top:665.00px;transform:scaleX(0.9330);transform-origin:0 0;">Expert napló</div>
<div class="t" style="font-size:10.5px;color:#8a8a8a;left:786.00px;top:665.00px;transform:scaleX(0.9696);transform-origin:0 0;">Napló</div>
<i class="a" style="left:230.7px;top:665px;width:1px;height:12px;background:#8a8a8a;"></i>
<i class="a" style="left:316px;top:665px;width:1px;height:12px;background:#8a8a8a;"></i>
<i class="a" style="left:356.5px;top:665px;width:1px;height:12px;background:#8a8a8a;"></i>
<i class="a" style="left:420px;top:665px;width:1px;height:12px;background:#8a8a8a;"></i>
<i class="a" style="left:493.7px;top:665px;width:1px;height:12px;background:#8a8a8a;"></i>
<i class="a" style="left:551.8px;top:665px;width:1px;height:12px;background:#8a8a8a;"></i>
<i class="a" style="left:587.6px;top:665px;width:1px;height:12px;background:#8a8a8a;"></i>
<i class="a" style="left:646.5px;top:665px;width:1px;height:12px;background:#8a8a8a;"></i>
<i class="a" style="left:704.6px;top:665px;width:1px;height:12px;background:#8a8a8a;"></i>
<i class="a" style="left:777.6px;top:665px;width:1px;height:12px;background:#8a8a8a;"></i>
<i class="a" style="left:822px;top:665px;width:1px;height:12px;background:#8a8a8a;"></i>
<div class="t" style="font-size:7.5px;color:#e02020;font-weight:bold;left:480.60px;top:672.00px;transform:scaleX(1.0550);transform-origin:0 0;">6</div>
<i class="a" style="left:91px;top:683px;width:1098px;height:1px;background:#a8a8a8;"></i>
<i class="a" style="left:91px;top:684px;width:1098px;height:1px;background:#fff;"></i>
<div class="t" style="font-size:10.5px;color:#000;left:93.00px;top:690.00px;transform:scaleX(0.9555);transform-origin:0 0;">Segítségért nyomja meg az F1 billentyűt</div>
<i class="a" style="left:594.6px;top:687px;width:1px;height:15px;background:#b8b8b8;"></i>
<i class="a" style="left:692.4px;top:687px;width:1px;height:15px;background:#b8b8b8;"></i>
<i class="a" style="left:780.7px;top:687px;width:1px;height:15px;background:#b8b8b8;"></i>
<i class="a" style="left:841px;top:687px;width:1px;height:15px;background:#b8b8b8;"></i>
<i class="a" style="left:901px;top:687px;width:1px;height:15px;background:#b8b8b8;"></i>
<i class="a" style="left:961px;top:687px;width:1px;height:15px;background:#b8b8b8;"></i>
<i class="a" style="left:1021px;top:687px;width:1px;height:15px;background:#b8b8b8;"></i>
<i class="a" style="left:1077px;top:687px;width:1px;height:15px;background:#b8b8b8;"></i>
<div class="t" style="font-size:10.5px;color:#000;left:599.00px;top:690.00px;transform:scaleX(0.8920);transform-origin:0 0;">Swiss Franc</div>
<div class="t" style="font-size:10.5px;color:#000;left:698.00px;top:690.00px;transform:scaleX(0.8772);transform-origin:0 0;">2016.09.26 00:00</div>
<div class="t" style="font-size:10.5px;color:#000;left:786.00px;top:690.00px;transform:scaleX(0.8662);transform-origin:0 0;">O: 1.12374</div>
<div class="t" style="font-size:10.5px;color:#000;left:847.50px;top:690.00px;transform:scaleX(0.8663);transform-origin:0 0;">H: 1.12791</div>
<div class="t" style="font-size:10.5px;color:#000;left:907.80px;top:690.00px;transform:scaleX(0.8705);transform-origin:0 0;">L: 1.12210</div>
<div class="t" style="font-size:10.5px;color:#000;left:966.80px;top:690.00px;transform:scaleX(0.8605);transform-origin:0 0;">C: 1.12498</div>
<div class="t" style="font-size:10.5px;color:#000;left:1026.60px;top:690.00px;transform:scaleX(0.8621);transform-origin:0 0;">V: 77809</div>
<div class="t" style="font-size:10.5px;color:#000;left:1106.00px;top:690.00px;transform:scaleX(0.9583);transform-origin:0 0;">686/1 kb</div>
<svg class="a" style="left:1082.6px;top:689px;" width="20" height="11.5" viewBox="0 0 20 11.5"><rect x="0.00" y="0" width="1.9" height="7.60" fill="#4f8414"/><rect x="0.00" y="8.30" width="1.9" height="3.20" fill="#a01a0c"/><rect x="2.50" y="0" width="1.9" height="6.73" fill="#4f8414"/><rect x="2.50" y="7.43" width="1.9" height="4.07" fill="#a01a0c"/><rect x="5.00" y="0" width="1.9" height="5.86" fill="#4f8414"/><rect x="5.00" y="6.56" width="1.9" height="4.94" fill="#a01a0c"/><rect x="7.50" y="0" width="1.9" height="4.99" fill="#4f8414"/><rect x="7.50" y="5.69" width="1.9" height="5.81" fill="#a01a0c"/><rect x="10.00" y="0" width="1.9" height="4.12" fill="#4f8414"/><rect x="10.00" y="4.82" width="1.9" height="6.68" fill="#a01a0c"/><rect x="12.50" y="0" width="1.9" height="3.25" fill="#4f8414"/><rect x="12.50" y="3.95" width="1.9" height="7.55" fill="#a01a0c"/><rect x="15.00" y="0" width="1.9" height="2.38" fill="#4f8414"/><rect x="15.00" y="3.08" width="1.9" height="8.42" fill="#a01a0c"/><rect x="17.50" y="0" width="1.9" height="1.51" fill="#4f8414"/><rect x="17.50" y="2.21" width="1.9" height="9.29" fill="#a01a0c"/></svg>
<i class="a" style="left:437.5px;top:719px;width:404.4px;height:30.5px;border-radius:15.5px;border:1px solid #8c9fba;background:linear-gradient(#c6d9ef,#bed3ec);box-shadow:0 0 0 1px rgba(255,255,255,.25)"></i>
<svg class="a" style="left:468px;top:726px;" width="18" height="17" viewBox="0 0 18 17"><circle cx="9.7" cy="7.3" r="6.1" fill="#dfeafa" stroke="#1a3cc0" stroke-width="2.3"/><path d="M5.2 11.8 L1.6 15.4" stroke="#1c2f9a" stroke-width="2.8" stroke-linecap="round"/><path d="M6.6 7.3h6.2M9.7 4.2v6.2" stroke="#1a3cc0" stroke-width="1.7"/></svg>
<i class="a" style="left:489.6px;top:733px;width:0;height:0;border-left:4px solid transparent;border-right:4px solid transparent;border-top:4.3px solid #1a3cc0"></i>
<svg class="a" style="left:526px;top:726px;" width="19" height="17" viewBox="0 0 19 17"><g stroke="#eef4fc" stroke-width="1.2" stroke-linejoin="round"><rect x="5" y="5.1" width="8.8" height="7" fill="#1a3cc0"/><path d="M9.4 0.6 L12.2 3.4 H6.6Z M9.4 16.4 L12.2 13.6 H6.6Z M0.6 8.5 L3.4 5.7 V11.3Z M18.2 8.5 L15.4 5.7 V11.3Z" fill="#1a3cc0"/></g><rect x="5" y="5.1" width="8.8" height="7" fill="#1a3cc0"/><path d="M9.4 0.6 L12.2 3.4 H6.6Z M9.4 16.4 L12.2 13.6 H6.6Z M0.6 8.5 L3.4 5.7 V11.3Z M18.2 8.5 L15.4 5.7 V11.3Z" fill="#1a3cc0"/><rect x="7.2" y="7.1" width="4.5" height="2.9" fill="#f2f6fc"/></svg>
<i class="a" style="left:568px;top:722.5px;width:52px;height:24px;border-radius:9px 0 0 9px;border:1px solid #6d7f97;background:linear-gradient(#e4ebf3 0,#c9d5e2 40%,#8e9fb4 52%,#aebccd 80%,#c9d5e2 100%)"></i>
<i class="a" style="left:660px;top:722.5px;width:52px;height:24px;border-radius:0 9px 9px 0;border:1px solid #6d7f97;background:linear-gradient(#e4ebf3 0,#c9d5e2 40%,#8e9fb4 52%,#aebccd 80%,#c9d5e2 100%)"></i>
<i class="a" style="left:567.5px;top:722px;width:51px;height:25px;border:1px dotted #222"></i>
<svg class="a" style="left:584px;top:727.5px;" width="16" height="14" viewBox="0 0 16 14"><rect x="0.5" y="0.5" width="3" height="13" fill="#1f3a99"/><path d="M15.5 0.5 L4.5 7 L15.5 13.5Z" fill="#1f3a99"/></svg>
<svg class="a" style="left:680.5px;top:727.5px;" width="16" height="14" viewBox="0 0 16 14"><rect x="12.5" y="0.5" width="3" height="13" fill="#1f3a99"/><path d="M0.5 0.5 L11.5 7 L0.5 13.5Z" fill="#1f3a99"/></svg>
<i class="a" style="left:615.9px;top:710.2px;width:48px;height:48px;border-radius:50%;background:#c3d7ee;border:1px solid #8f9db2"></i>
<i class="a" style="left:619.4px;top:713.7px;width:41px;height:41px;border-radius:50%;border:1.6px solid #16247a;background:radial-gradient(ellipse 60% 40% at 50% 92%,#56c8ff 0,rgba(86,200,255,0) 100%),radial-gradient(ellipse 80% 50% at 50% 5%,#8fb2ee 0,rgba(120,160,230,0) 100%),linear-gradient(#3a62d0 0,#1838b4 45%,#0a2299 55%,#1a56d8 100%)"></i>
<svg class="a" style="left:629px;top:725px;" width="22" height="19" viewBox="0 0 22 19"><rect x="0.5" y="0.5" width="21" height="18" rx="1.5" fill="#f6f6f6" stroke="#d8dce4" stroke-width="1"/><rect x="3.5" y="3.5" width="15" height="11" fill="#5f9fd0"/><rect x="3.5" y="3.5" width="15" height="5" fill="#bfdcf2"/><path d="M3.5 14.5 V10 L8 8 L12 10.5 L15 9.5 L18.5 11 V14.5Z" fill="#3c7a50"/></svg>
<svg class="a" style="left:729.5px;top:725px;" width="16" height="18" viewBox="0 0 16 18"><path d="M8.2 5.1 A4.7 4.7 0 1 1 4.13 12.15" fill="none" stroke="#1c2a9c" stroke-width="2.7"/><path d="M7.9 0.6 L1.2 5.1 L7.9 9.2Z" fill="#1c62e0"/></svg>
<svg class="a" style="left:763px;top:725px;" width="16" height="18" viewBox="0 0 16 18"><path d="M7.8 5.1 A4.7 4.7 0 1 0 11.87 12.15" fill="none" stroke="#1c2a9c" stroke-width="2.7"/><path d="M8.1 0.6 L14.8 5.1 L8.1 9.2Z" fill="#1c62e0"/></svg>
<i class="a" style="left:793.7px;top:725px;width:1px;height:18.5px;background:#8c9cb4;"></i>
<svg class="a" style="left:808.5px;top:726px;" width="16" height="16" viewBox="0 0 16 16"><path d="M1.6 1.4 L14.8 14 M14.6 1.4 L1.6 14" stroke="#c8141e" stroke-width="1.9" stroke-linecap="round"/></svg>
<i id="wst" class="a"></i>
</div>
</body></html>
